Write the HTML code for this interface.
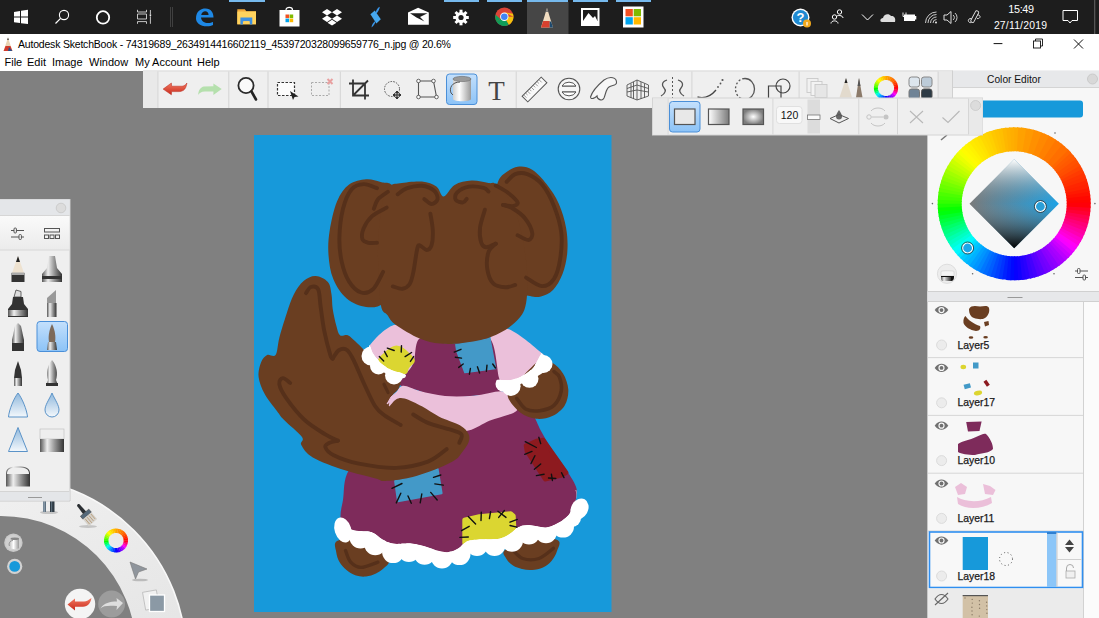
<!DOCTYPE html>
<html><head><meta charset="utf-8">
<style>
html,body{margin:0;padding:0;width:1099px;height:618px;overflow:hidden;background:#808080;font-family:"Liberation Sans", sans-serif;}
.a{position:absolute;}
#tb{left:0;top:0;width:1099px;height:34px;background:#1d1d1d;}
#title{left:0;top:34px;width:1099px;height:21px;background:#fff;}
#menu{left:0;top:55px;width:1099px;height:15.5px;background:#fff;}
.mt{position:absolute;top:0;font-size:11px;color:#000;line-height:15px;white-space:nowrap;}
</style></head><body>
<div class="a" id="tb"><svg width="1099" height="34" style="position:absolute;left:0;top:0"><rect x="229" y="0" width="36" height="2" fill="#76b9ed"/><rect x="444" y="0" width="35" height="2" fill="#76b9ed"/><rect x="487" y="0" width="35" height="2" fill="#76b9ed"/><rect x="527" y="0" width="41" height="2" fill="#76b9ed"/><rect x="573" y="0" width="35" height="2" fill="#76b9ed"/><rect x="616" y="0" width="35" height="2" fill="#76b9ed"/><rect x="527" y="2" width="41.5" height="32" fill="#464646"/><path d="M14,12 L20,11 L20,16.6 L14,16.6Z M21,10.8 L28,9.8 L28,16.6 L21,16.6Z M14,17.4 L20,17.4 L20,23 L14,22.2Z M21,17.4 L28,17.4 L28,24 L21,23.2Z" fill="#fff"/><circle cx="64" cy="15" r="4.6" fill="none" stroke="#fff" stroke-width="1.1"/><line x1="60.6" y1="18.4" x2="55.5" y2="23.5" stroke="#fff" stroke-width="1.2"/><circle cx="103" cy="17.4" r="6.2" fill="none" stroke="#fff" stroke-width="1.8"/><path d="M137.5,9.8 V12 H146.5 V9.8 M137.5,23.8 V21.6 H146.5 V23.8 M137.5,14 H146.5 V19 H137.5Z M150.4,10 V14 M150.4,16.3 V23.8" stroke="#d8d8d8" stroke-width="0.9" fill="none"/><circle cx="150.4" cy="15.1" r="0.9" fill="#fff"/><rect x="170" y="7" width="0.8" height="20" fill="#4a4a4a"/><rect x="172.2" y="7" width="0.8" height="20" fill="#4a4a4a"/><path d="M196,18.5 C196,11 201,8.5 205.5,8.5 C211,8.5 213.5,12.5 213.5,17.5 L201,17.5 C201.5,21.5 204.5,23 208,23 C210,23 212,22.5 213,22 L213,25 C211.5,25.8 209.5,26.3 207,26.3 C200,26.3 196,22.5 196,18.5Z M201.2,15 L208.6,15 C208.4,12.6 207.2,11.3 205.2,11.3 C203.3,11.3 201.8,12.6 201.2,15Z" fill="#1e88e5"/><path d="M237.3,9.3 h7.5 l1.5,2 h9.7 v13 h-18.7z" fill="#f2a93a"/><rect x="237.3" y="11.5" width="18.7" height="12.8" fill="#ffd35e"/><path d="M240.4,17.5 h11.9 v7.1 h-2.5 v-3.3 h-6.9 v3.3 h-2.5z" fill="#3d8fe0"/><rect x="244" y="21.2" width="5" height="2.2" fill="#ffd35e"/><path d="M286,10 C286,6.5 292.5,6.5 292.5,10" fill="none" stroke="#fff" stroke-width="1.2"/><rect x="279.5" y="10" width="20" height="16.5" fill="#fff"/><rect x="285.5" y="14.5" width="3.6" height="3.6" fill="#f25022"/><rect x="289.6" y="14.5" width="3.6" height="3.6" fill="#7fba00"/><rect x="285.5" y="18.6" width="3.6" height="3.6" fill="#00a4ef"/><rect x="289.6" y="18.6" width="3.6" height="3.6" fill="#ffb900"/><path d="M327,9 l5,3.2 -5,3.2 -5,-3.2z M337,9 l5,3.2 -5,3.2 -5,-3.2z M327,15.6 l5,3.2 -5,3.2 -5,-3.2z M337,15.6 l5,3.2 -5,3.2 -5,-3.2z M332,19.8 l4.5,2.9 -4.5,2.9 -4.5,-2.9z" fill="#fff"/><path d="M370.4,14.3 L374.8,10.4 L380.8,19.2 L376.4,23.6z" fill="#46a8ef"/><path d="M375.6,12.8 C376,9.8 378,7.6 379.8,6.8 C379.6,9.2 378.2,11.6 376.6,13.6z M371.5,27.5 C371.8,24.6 373.5,22 375.6,20.8 C375.5,23.2 374,25.6 371.5,27.5z" fill="#3a94e6"/><path d="M408,12.6 L418.1,7.7 L428.8,12.6 L428.8,24.7 L408,24.7z" fill="#fff"/><path d="M410,13.3 L427.5,13.3 L420,17 L424.5,21.5 L416.5,17.4z" fill="#1d1d1d"/><g transform="translate(461,17.5)"><circle r="5.5" fill="#fff"/><circle r="2.6" fill="#1c1c1c"/><rect x="-1.5" y="-7.8" width="3" height="3.5" fill="#fff" transform="rotate(0)"/><rect x="-1.5" y="-7.8" width="3" height="3.5" fill="#fff" transform="rotate(45)"/><rect x="-1.5" y="-7.8" width="3" height="3.5" fill="#fff" transform="rotate(90)"/><rect x="-1.5" y="-7.8" width="3" height="3.5" fill="#fff" transform="rotate(135)"/><rect x="-1.5" y="-7.8" width="3" height="3.5" fill="#fff" transform="rotate(180)"/><rect x="-1.5" y="-7.8" width="3" height="3.5" fill="#fff" transform="rotate(225)"/><rect x="-1.5" y="-7.8" width="3" height="3.5" fill="#fff" transform="rotate(270)"/><rect x="-1.5" y="-7.8" width="3" height="3.5" fill="#fff" transform="rotate(315)"/></g><circle cx="504.3" cy="16.8" r="9.2" fill="#db4437"/><path d="M504.3,16.8 L496.3,21.4 A9.2,9.2 0 0 0 508.9,24.8z" fill="#0f9d58"/><path d="M504.3,16.8 L508.9,24.8 A9.2,9.2 0 0 0 513.5,16.8z M504.3,12.2 L513,13.8 A9.2,9.2 0 0 1 513.5,16.8z" fill="#f4c20d"/><path d="M496.3,21.4 A9.2,9.2 0 0 1 495.4,14.6 L500.3,19z" fill="#0f9d58"/><circle cx="504.3" cy="16.8" r="4.2" fill="#fff"/><circle cx="504.3" cy="16.8" r="3.3" fill="#4285f4"/><path d="M547,8 L541,27.5 L553,27.5z" fill="#f0dcc0"/><path d="M543.2,21 L549.7,21 L549.7,27.5 L541,27.5z" fill="#d8402e"/><path d="M549.7,21.4 L551.2,21.4 L553,27.5 L549.7,27.5z" fill="#1f4a6e"/><path d="M547,7.7 L545.8,12 L548.2,12z" fill="#777"/><rect x="581" y="8" width="18.5" height="18" fill="#fff"/><rect x="583" y="10" width="14.5" height="11" fill="#1c1c1c"/><path d="M583,21 L588.5,13 L593,18 L595,16 L597.5,21z" fill="#fff"/><rect x="623" y="6.5" width="20.5" height="21" fill="#fff"/><rect x="625.5" y="9" width="7.3" height="7.3" fill="#f25022"/><rect x="633.7" y="9" width="7.3" height="7.3" fill="#7fba00"/><rect x="625.5" y="17.2" width="7.3" height="7.3" fill="#00a4ef"/><rect x="633.7" y="17.2" width="7.3" height="7.3" fill="#ffb900"/><circle cx="800.5" cy="17.5" r="9" fill="#fff"/><circle cx="800.5" cy="17.5" r="7.6" fill="#1f8ad2"/><text x="800.5" y="22" font-family='"Liberation Sans"' font-weight="bold" font-size="13" fill="#fff" text-anchor="middle">?</text><circle cx="807" cy="23.5" r="4" fill="#f0a81e"/><rect x="806.4" y="22" width="1.2" height="3.5" fill="#fff"/><g fill="none" stroke="#fff" stroke-width="1"><circle cx="834.5" cy="17" r="2.2"/><path d="M831,23.5 C831,20 838,20 838,23.5"/><circle cx="839.5" cy="12" r="2.2"/><path d="M836.5,16.5 C837,15 843,15 843,18"/></g><path d="M862,14.5 L867.5,20 L873,14.5" fill="none" stroke="#fff" stroke-width="1"/><path d="M882,22 C879.5,22 880,18 883,18 C883.5,14 889,13 891,16 C894,15.5 896,18 895,22z" fill="#ddd"/><rect x="904" y="14.5" width="11" height="6.5" fill="#fff"/><rect x="915" y="16" width="1.3" height="3.5" fill="#fff"/><path d="M903,12.5 v4 h3 v-4" fill="none" stroke="#fff" stroke-width="0.9"/><g fill="none" stroke="#ddd" stroke-width="0.9"><path d="M925.5,23 A11,11 0 0 1 936.5,12"/><path d="M928,23 A8.5,8.5 0 0 1 936.5,14.5"/><path d="M930.5,23 A6,6 0 0 1 936.5,17"/><path d="M933,23 A3.5,3.5 0 0 1 936.5,19.5"/></g><circle cx="936" cy="22.5" r="0.9" fill="#fff"/><path d="M944,15 h3 l4,-3.5 v12 l-4,-3.5 h-3z" fill="none" stroke="#ddd" stroke-width="1"/><path d="M953,15 a3,3 0 0 1 0,5 M955,13 a6,6 0 0 1 0,9" fill="none" stroke="#ddd" stroke-width="0.9"/><g fill="none" stroke="#e8e8e8" stroke-width="0.9"><rect x="968.5" y="15" width="12.5" height="3.4" rx="1.2" transform="rotate(-62 974.7 16.7)"/><path d="M971.5,18.5 C967,18 967.5,23.5 971.5,22.5"/><path d="M977.5,14.8 C981,15 981,18.8 977,18.6"/></g><text x="1021" y="13" font-family='"Liberation Sans", sans-serif' font-size="10.8" letter-spacing="-0.3" fill="#fff" text-anchor="middle">15:49</text><text x="1020.5" y="29" font-family='"Liberation Sans", sans-serif' font-size="10.4" letter-spacing="0.2" fill="#fff" text-anchor="middle">27/11/2019</text><path d="M1063,10.5 h14.5 v10 h-5.5 l-2,2.5 l-2,-2.5 h-5z" fill="none" stroke="#fff" stroke-width="1"/><rect x="1094" y="0" width="1.3" height="34" fill="#555"/></svg></div>
<div class="a" id="title">
 <svg class="a" style="left:0;top:0" width="20" height="21"><path d="M8,3.5 L3.6,17 L12.4,17z" fill="#e9d4b4"/><path d="M5.5,12 L3.6,17 L12.4,17 L10.5,12z" fill="#d13a2c"/><path d="M9,13 L12.4,17 L8,17z" fill="#2b4f88"/><path d="M8,3.5 L7.2,6 L8.8,6z" fill="#333"/></svg>
 <div class="mt" style="left:18px;top:3px;font-size:10.5px;letter-spacing:-0.2px;">Autodesk SketchBook - 74319689_2634914416602119_4539720328099659776_n.jpg @ 20.6%</div>
 <svg class="a" style="left:985px;top:0" width="114" height="21"><line x1="8.6" y1="9.6" x2="17.4" y2="9.6" stroke="#111" stroke-width="1"/><path d="M50.5,7 V5 H57.5 V12 H55.5" fill="none" stroke="#111" stroke-width="0.9"/><rect x="48.5" y="7" width="7" height="7" fill="none" stroke="#111" stroke-width="0.9"/><path d="M89,5.5 L98,14.5 M98,5.5 L89,14.5" stroke="#111" stroke-width="1"/></svg>
</div>
<div class="a" id="menu">
 <div class="mt" style="left:4.5px">File</div><div class="mt" style="left:27px">Edit</div><div class="mt" style="left:52px">Image</div><div class="mt" style="left:89px">Window</div><div class="mt" style="left:135px">My Account</div><div class="mt" style="left:197px">Help</div>
</div>
<svg class="a" style="left:0;top:0" width="1099" height="618"><defs>
<linearGradient id="gUndo" x1="0" y1="0" x2="0" y2="1"><stop offset="0" stop-color="#f27a62"/><stop offset="1" stop-color="#c8281a"/></linearGradient>
<linearGradient id="gRedo" x1="0" y1="0" x2="0" y2="1"><stop offset="0" stop-color="#c9ecc4"/><stop offset="1" stop-color="#a4d89c"/></linearGradient>
<linearGradient id="gSel" x1="0" y1="0" x2="0" y2="1"><stop offset="0" stop-color="#c4e0fc"/><stop offset="1" stop-color="#8cc3f7"/></linearGradient>
<linearGradient id="gCan" x1="0" y1="0" x2="1" y2="0"><stop offset="0" stop-color="#d0d0d0"/><stop offset="0.35" stop-color="#ffffff"/><stop offset="1" stop-color="#9a9a9a"/></linearGradient>
<linearGradient id="gLin" x1="0" y1="0" x2="1" y2="0"><stop offset="0" stop-color="#ffffff"/><stop offset="1" stop-color="#7a7a7a"/></linearGradient>
<radialGradient id="gRad"><stop offset="0" stop-color="#ffffff"/><stop offset="1" stop-color="#7d7d7d"/></radialGradient>
<linearGradient id="gMetal" x1="0" y1="0" x2="1" y2="0"><stop offset="0" stop-color="#555"/><stop offset="0.3" stop-color="#eee"/><stop offset="0.6" stop-color="#999"/><stop offset="1" stop-color="#333"/></linearGradient>
<linearGradient id="gBlueTri" x1="0" y1="0" x2="0" y2="1"><stop offset="0" stop-color="#8fb8dc"/><stop offset="1" stop-color="#f4f8fc"/></linearGradient>
<linearGradient id="gPal2" x1="0" y1="0" x2="0" y2="1"><stop offset="0" stop-color="#fafafa"/><stop offset="1" stop-color="#ebebeb"/></linearGradient>
<linearGradient id="gLag" x1="0" y1="0" x2="1" y2="1"><stop offset="0" stop-color="#f4f4f4"/><stop offset="1" stop-color="#e4e4e4"/></linearGradient>
</defs><rect x="254" y="135" width="357.5" height="477" fill="#1799da"/>
<path d="M337.0,541.0 C333.0,543.3 335.8,548.5 336.2,552.0 C336.6,555.5 337.8,559.0 339.5,562.0 C341.2,565.0 343.8,567.8 346.5,570.0 C349.2,572.2 352.8,574.4 356.0,575.5 C359.2,576.6 362.7,576.8 366.0,576.5 C369.3,576.2 373.0,574.9 376.0,573.5 C379.0,572.1 381.8,570.1 384.0,568.0 C386.2,565.9 389.3,564.3 389.0,561.0 C388.7,557.7 386.8,551.8 382.0,548.0 C377.2,544.2 367.5,539.2 360.0,538.0 C352.5,536.8 341.0,538.7 337.0,541.0Z" fill="#6a3e21"/>
<path d="M345.5,550.5 C346.4,552.5 348.1,559.4 350.7,562.2 C353.3,565.0 356.5,567.4 361.0,567.4 C365.5,567.4 375.1,563.1 377.9,562.2" fill="none" stroke="#56301a" stroke-width="3.4" stroke-linecap="round" stroke-linejoin="round"/>
<path d="M505.0,550.0 C501.1,553.5 505.2,556.4 506.5,559.0 C507.8,561.6 510.4,563.8 513.0,565.5 C515.6,567.2 518.8,568.2 522.0,569.0 C525.2,569.8 528.5,570.2 532.0,570.0 C535.5,569.8 539.8,569.0 543.0,567.5 C546.2,566.0 549.2,563.8 551.5,561.0 C553.8,558.2 556.0,554.5 557.0,551.0 C558.0,547.5 562.0,542.2 557.5,540.0 C553.0,537.8 538.8,536.3 530.0,538.0 C521.2,539.7 508.9,546.5 505.0,550.0Z" fill="#6a3e21"/>
<path d="M512.6,549.7 C514.3,551.2 518.4,557.0 522.8,558.5 C527.2,560.0 533.8,560.2 538.9,558.5 C544.0,556.8 551.0,550.0 553.4,548.3" fill="none" stroke="#56301a" stroke-width="3.4" stroke-linecap="round" stroke-linejoin="round"/>
<path d="M349.0,470.0 C342.8,480.0 344.4,492.1 343.0,500.0 C341.6,507.9 340.3,511.6 340.5,517.4 C340.7,523.2 340.7,531.7 344.0,535.0 C347.3,538.3 355.3,535.9 360.5,537.4 C365.7,538.9 369.8,541.8 375.2,544.2 C380.6,546.7 387.5,551.0 393.1,552.1 C398.7,553.2 403.6,550.7 408.9,551.0 C414.1,551.3 419.1,552.6 424.6,553.7 C430.1,554.8 436.2,557.4 442.0,557.5 C447.8,557.6 453.7,556.2 459.5,554.1 C465.3,552.0 471.2,546.4 477.0,544.9 C482.8,543.4 488.7,545.6 494.5,544.9 C500.3,544.2 506.2,542.6 512.0,540.7 C517.8,538.8 523.3,534.8 529.0,533.4 C534.7,532.0 540.3,533.3 546.0,532.2 C551.7,531.1 558.7,529.0 563.0,526.6 C567.3,524.2 570.5,519.4 572.0,518.0 C573.5,516.6 571.2,521.7 572.0,518.0 C572.8,514.3 576.0,501.3 576.5,495.7 C577.0,490.1 577.2,489.5 575.0,484.4 C572.8,479.3 567.0,471.1 563.0,465.0 C559.0,458.9 554.7,453.7 551.0,448.0 C547.3,442.3 544.2,436.8 541.0,431.0 C537.8,425.2 535.5,417.5 532.0,413.0 C528.5,408.5 525.3,404.2 520.0,404.0 C514.7,403.8 513.3,409.3 500.0,412.0 C486.7,414.7 460.0,415.3 440.0,420.0 C420.0,424.7 395.2,431.7 380.0,440.0 C364.8,448.3 355.2,460.0 349.0,470.0Z" fill="#7e2b5b"/>
<path d="M395.1,481.0 L437.6,468.9 L441.6,493.2 L398.0,501.3Z" fill="#4399c8" stroke="#4399c8" stroke-width="2" stroke-linejoin="round"/>
<path d="M525.7,445.5 L536.4,440.7 L543.2,439.7 L566.5,472.7 L561.6,475.6 L545.1,479.5 L526.7,451.4Z" fill="#8d1a1f" stroke="#8d1a1f" stroke-width="4" stroke-linejoin="round"/>
<path d="M464.3,519.8 L479.3,516.2 L510.8,513.3 L513.7,515.8 L514.5,531.6 L493.8,539.6 L479.3,541.0 L464.3,543.0Z" fill="#dbd631" stroke="#dbd631" stroke-width="4" stroke-linejoin="round"/>
<clipPath id="trimclip"><path d="M340.5,517.4 C342.2,519.3 347.5,526.6 351.0,528.9 C354.5,531.2 358.0,530.5 361.5,531.0 C365.0,531.5 368.5,530.6 372.0,532.0 C375.5,533.4 379.1,537.5 382.6,539.4 C386.1,541.3 389.6,542.9 393.1,543.6 C396.6,544.3 400.8,543.7 403.6,543.6 C406.4,543.5 406.5,542.9 410.0,543.3 C413.5,543.7 419.8,544.9 424.6,546.2 C429.5,547.5 435.1,550.1 439.1,551.1 C443.1,552.1 445.6,552.5 448.8,552.0 C452.0,551.5 455.6,550.0 458.5,548.2 C461.4,546.4 463.1,542.9 466.3,541.4 C469.6,539.9 472.4,539.9 478.0,539.4 C483.6,538.9 494.4,539.7 500.0,538.5 C505.6,537.3 508.6,534.3 511.6,532.4 C514.6,530.5 515.1,528.2 518.0,527.0 C520.9,525.8 524.3,525.0 529.0,525.1 C533.7,525.2 541.1,527.8 546.0,527.4 C550.9,527.0 554.6,524.9 558.4,522.8 C562.2,520.7 566.0,517.9 568.6,514.9 C571.2,511.9 573.0,507.9 574.3,504.7 C575.6,501.5 576.3,498.1 576.5,495.7 C576.7,493.2 575.6,490.9 575.4,490.0 L600,490 L600,600 L320,600 L320,517.4Z"/></clipPath>
<g clip-path="url(#trimclip)"><path d="M340.5,517.4 C341.7,517.2 347.5,526.6 351.0,528.9 C354.5,531.2 358.0,530.5 361.5,531.0 C365.0,531.5 368.5,530.6 372.0,532.0 C375.5,533.4 379.1,537.5 382.6,539.4 C386.1,541.3 389.6,542.9 393.1,543.6 C396.6,544.3 400.8,543.7 403.6,543.6 C406.4,543.5 406.5,542.9 410.0,543.3 C413.5,543.7 419.8,544.9 424.6,546.2 C429.5,547.5 435.1,550.1 439.1,551.1 C443.1,552.1 445.6,552.5 448.8,552.0 C452.0,551.5 455.6,550.0 458.5,548.2 C461.4,546.4 463.1,542.9 466.3,541.4 C469.6,539.9 472.4,539.9 478.0,539.4 C483.6,538.9 494.4,539.7 500.0,538.5 C505.6,537.3 508.6,534.3 511.6,532.4 C514.6,530.5 515.1,528.2 518.0,527.0 C520.9,525.8 524.3,525.0 529.0,525.1 C533.7,525.2 541.1,527.8 546.0,527.4 C550.9,527.0 554.6,524.9 558.4,522.8 C562.2,520.7 566.0,517.9 568.6,514.9 C571.2,511.9 573.0,507.9 574.3,504.7 C575.6,501.5 576.3,498.1 576.5,495.7 C576.7,493.2 576.1,486.3 575.4,490.0 C574.6,493.7 574.1,511.9 572.0,518.0 C569.9,524.1 567.3,524.2 563.0,526.6 C558.7,529.0 551.7,531.1 546.0,532.2 C540.3,533.3 534.7,532.0 529.0,533.4 C523.3,534.8 517.8,538.8 512.0,540.7 C506.2,542.6 500.3,544.2 494.5,544.9 C488.7,545.6 482.8,543.4 477.0,544.9 C471.2,546.4 465.3,552.0 459.5,554.1 C453.7,556.2 447.8,557.6 442.0,557.5 C436.2,557.4 430.1,554.8 424.6,553.7 C419.1,552.6 414.1,551.3 408.9,551.0 C403.6,550.7 398.7,553.2 393.1,552.1 C387.5,551.0 380.6,546.7 375.2,544.2 C369.8,541.8 365.7,539.8 360.5,537.4 C355.3,535.0 347.3,533.3 344.0,530.0 C340.7,526.7 339.3,517.6 340.5,517.4Z" fill="#ffffff"/><circle cx="360.5" cy="537.4" r="11" fill="#ffffff"/><circle cx="375.2" cy="544.2" r="11" fill="#ffffff"/><circle cx="393.1" cy="552.1" r="11" fill="#ffffff"/><circle cx="408.9" cy="551" r="11" fill="#ffffff"/><circle cx="424.6" cy="553.7" r="11" fill="#ffffff"/><circle cx="442" cy="557.5" r="11" fill="#ffffff"/><circle cx="459.5" cy="554.1" r="11" fill="#ffffff"/><circle cx="477" cy="544.9" r="11" fill="#ffffff"/><circle cx="494.5" cy="544.9" r="11" fill="#ffffff"/><circle cx="512" cy="540.7" r="11" fill="#ffffff"/><circle cx="529" cy="533.4" r="11" fill="#ffffff"/><circle cx="546" cy="532.2" r="11" fill="#ffffff"/><circle cx="563" cy="526.6" r="11" fill="#ffffff"/><circle cx="572" cy="518" r="9" fill="#ffffff"/></g>
<ellipse cx="343" cy="530" rx="8.3" ry="12.8" transform="rotate(-18 343 530)" fill="#ffffff"/>
<ellipse cx="579.5" cy="509" rx="8.5" ry="11" transform="rotate(28 579.5 509)" fill="#ffffff"/>
<path d="M369.6,345.7 C373.5,339.8 386.9,325.8 395.5,324.7 C404.1,323.6 418.3,332.8 421.3,339.3 C424.3,345.8 416.3,357.3 413.3,363.5 C410.3,369.7 407.9,375.1 403.5,376.5 C399.1,377.9 392.2,374.8 387.0,372.0 C381.8,369.2 374.9,364.4 372.0,360.0 C369.1,355.6 365.7,351.6 369.6,345.7Z" fill="#ebc0da"/>
<path d="M490.0,339.6 C491.8,331.1 499.2,326.7 507.8,328.9 C516.4,331.1 535.1,347.4 541.6,352.9 C548.1,358.4 547.6,358.8 547.0,362.0 C546.4,365.2 542.8,368.8 538.0,372.0 C533.2,375.2 524.3,379.2 518.0,381.0 C511.7,382.8 503.5,383.2 500.0,383.0 C496.5,382.8 498.7,387.2 497.0,380.0 C495.3,372.8 488.2,348.1 490.0,339.6Z" fill="#ebc0da"/>
<path d="M419.7,338.5 C425.0,335.1 437.9,342.6 445.0,343.3 C452.1,344.1 455.1,343.8 462.6,343.0 C470.1,342.2 483.8,332.7 489.8,338.5 C495.9,344.3 496.9,368.8 498.9,377.6 C500.9,386.4 505.8,388.2 501.7,391.2 C497.6,394.2 484.3,394.6 474.0,395.7 C463.7,396.8 449.1,398.8 440.0,398.0 C430.9,397.2 426.6,393.2 419.7,391.0 C412.8,388.8 401.4,387.0 398.7,384.6 C396.0,382.2 401.1,380.0 403.5,376.5 C405.9,373.0 410.6,369.8 413.3,363.5 C416.0,357.2 414.4,341.9 419.7,338.5Z" fill="#7e2b5b"/>
<path d="M378.0,361.0 C377.8,357.7 383.3,353.5 386.0,351.0 C388.7,348.5 391.8,346.8 394.0,346.0 C396.2,345.2 397.0,345.3 399.0,346.0 C401.0,346.7 403.4,347.6 406.0,350.0 C408.6,352.4 414.3,357.2 414.8,360.2 C415.3,363.2 410.6,365.7 409.0,368.0 C407.4,370.3 408.7,373.6 405.1,374.0 C401.5,374.4 391.8,372.9 387.3,370.7 C382.8,368.5 378.2,364.3 378.0,361.0Z" fill="#dbd631"/>
<path d="M455.9,344.7 L489.8,338.5 L495.5,368.5 L464.9,372.5 L457.0,351.5Z" fill="#4399c8" stroke="#4399c8" stroke-width="1.6" stroke-linejoin="round"/>
<path d="M386.6,404.8 C385.6,401.1 391.2,400.6 393.8,397.5 C396.4,394.4 397.7,387.1 402.0,386.0 C406.3,384.9 412.5,389.3 419.7,391.0 C426.9,392.7 435.9,395.2 445.0,396.0 C454.1,396.8 464.6,396.5 474.0,395.7 C483.4,394.9 495.7,390.8 501.7,391.2 C507.7,391.6 507.5,394.8 510.0,398.0 C512.5,401.2 520.0,406.9 516.7,410.7 C513.4,414.4 498.0,417.2 490.0,420.5 C482.0,423.8 476.8,428.6 468.5,430.5 C460.2,432.4 451.4,433.8 440.0,432.0 C428.6,430.2 408.9,424.5 400.0,420.0 C391.1,415.5 387.6,408.6 386.6,404.8Z" fill="#ebc0da"/>
<path d="M540.0,360.0 C546.2,356.3 548.5,360.5 552.3,362.7 C556.1,364.9 560.3,368.9 563.0,373.4 C565.7,377.8 568.0,384.1 568.3,389.4 C568.6,394.7 567.4,401.0 564.7,405.4 C562.0,409.8 557.0,413.8 552.3,416.0 C547.6,418.2 541.6,419.4 536.3,418.8 C530.9,418.2 525.0,416.2 520.2,412.5 C515.5,408.8 508.7,401.1 507.8,396.5 C506.9,391.9 509.6,391.1 515.0,385.0 C520.4,378.9 533.8,363.7 540.0,360.0Z" fill="#6a3e21"/>
<path d="M516.7,398.3 C518.2,400.1 521.8,406.9 525.6,409.0 C529.5,411.1 535.1,411.3 539.8,410.7 C544.5,410.1 550.4,408.6 554.0,405.4 C557.6,402.1 560.3,395.9 561.2,391.2 C562.1,386.5 560.6,380.3 559.4,377.0 C558.2,373.7 554.9,372.5 554.0,371.6" fill="none" stroke="#56301a" stroke-width="3.6" stroke-linecap="round" stroke-linejoin="round"/>
<clipPath id="rcuff"><path d="M498.0,379.7 C499.7,379.8 505.2,380.5 508.4,380.2 C511.6,379.9 514.3,379.1 517.3,378.0 C520.3,376.9 523.5,375.3 526.2,373.5 C528.9,371.7 531.4,369.5 533.3,367.3 C535.2,365.1 536.5,362.2 537.7,360.1 C538.9,358.0 539.8,356.0 540.4,354.8 C541.0,353.6 541.1,353.3 541.3,353.0 L560,340 L570,420 L490,420 L490,379.7Z"/></clipPath>
<g clip-path="url(#rcuff)"><path d="M498.0,379.7 C499.6,379.1 505.2,380.5 508.4,380.2 C511.6,379.9 514.3,379.1 517.3,378.0 C520.3,376.9 523.5,375.3 526.2,373.5 C528.9,371.7 531.4,369.5 533.3,367.3 C535.2,365.1 536.5,362.2 537.7,360.1 C538.9,358.0 539.8,356.0 540.4,354.8 C541.0,353.6 539.4,351.3 541.3,353.0 C543.2,354.7 551.5,361.8 552.0,365.0 C552.5,368.2 547.7,369.5 544.0,372.0 C540.3,374.5 535.7,377.5 530.0,380.0 C524.3,382.5 515.2,386.3 510.0,387.0 C504.8,387.7 501.0,385.2 499.0,384.0 C497.0,382.8 496.4,380.3 498.0,379.7Z" fill="#ffffff"/><circle cx="543.5" cy="364" r="9" fill="#ffffff"/><circle cx="529.5" cy="378.8" r="9" fill="#ffffff"/><circle cx="511" cy="386.3" r="9.6" fill="#ffffff"/><circle cx="503" cy="384" r="7.5" fill="#ffffff"/></g>
<path d="M366.1,179.2 C360.9,179.6 354.0,180.9 349.1,184.6 C344.2,188.3 340.2,193.8 337.0,201.5 C333.8,209.2 331.1,221.7 329.7,230.6 C328.3,239.5 327.9,246.8 328.5,254.9 C329.1,263.0 330.3,271.8 333.3,279.1 C336.3,286.4 341.2,293.9 346.7,298.5 C352.2,303.1 359.9,306.2 366.1,307.0 C372.3,307.8 378.4,307.5 384.0,303.0 C389.6,298.5 396.5,290.5 400.0,280.0 C403.5,269.5 405.8,255.0 405.0,240.0 C404.2,225.0 399.1,199.7 395.0,190.0 C390.9,180.3 385.4,183.9 380.6,182.1 C375.8,180.3 371.4,178.8 366.1,179.2Z" fill="#6a3e21"/>
<path d="M497.0,185.5 C498.4,179.6 499.7,177.7 503.1,174.6 C506.5,171.5 512.8,167.6 517.6,166.8 C522.5,166.0 527.4,166.8 532.2,169.7 C537.1,172.6 542.3,178.6 546.7,184.3 C551.1,190.0 555.6,196.4 558.8,203.7 C562.0,211.0 564.7,219.8 566.1,227.9 C567.5,236.0 567.9,244.5 567.3,252.2 C566.7,259.9 564.9,267.7 562.5,274.0 C560.1,280.3 556.6,286.2 553.0,290.0 C549.4,293.8 544.8,295.5 541.0,296.5 C537.2,297.5 534.3,297.1 530.0,296.0 C525.7,294.9 520.8,297.7 515.0,290.0 C509.2,282.3 498.3,263.3 495.0,250.0 C491.7,236.7 494.7,220.8 495.0,210.0 C495.3,199.2 495.6,191.4 497.0,185.5Z" fill="#6a3e21"/>
<path d="M389.1,187.0 C392.1,183.4 394.5,184.2 400.0,183.3 C405.5,182.4 415.8,181.1 421.9,181.6 C428.0,182.1 432.8,184.0 436.4,186.5 C440.0,189.0 440.7,196.8 443.7,196.5 C446.7,196.2 450.0,187.7 454.6,185.0 C459.2,182.3 465.9,180.9 471.5,180.6 C477.1,180.3 484.2,182.2 488.5,183.0 C492.8,183.8 492.6,181.0 497.0,185.5 C501.4,190.0 510.2,197.6 515.0,210.0 C519.8,222.4 524.1,244.5 526.0,260.0 C527.9,275.5 527.9,292.7 526.1,303.1 C524.3,313.5 520.8,317.0 515.0,322.6 C509.2,328.2 500.1,333.4 491.4,336.8 C482.7,340.2 471.2,341.9 462.6,343.0 C454.0,344.1 447.1,344.4 440.0,343.6 C432.9,342.9 427.1,341.6 419.7,338.5 C412.3,335.4 400.9,328.6 395.5,324.7 C390.1,320.8 389.9,318.6 387.4,315.0 C384.9,311.4 382.2,314.2 380.6,303.4 C379.0,292.6 377.8,266.4 378.0,250.0 C378.2,233.6 380.1,215.5 382.0,205.0 C383.9,194.5 386.1,190.6 389.1,187.0Z" fill="#6a3e21"/>
<path d="M315.7,276.1 C319.8,276.3 325.3,279.1 327.9,282.1 C330.5,285.1 330.7,289.8 331.5,294.3 C332.3,298.8 331.9,303.6 332.7,308.9 C333.5,314.2 335.2,321.5 336.4,325.9 C337.6,330.3 338.1,333.6 340.0,335.2 C341.9,336.8 345.2,334.1 347.8,335.2 C350.4,336.3 352.8,339.1 355.5,341.6 C358.2,344.1 360.6,346.6 364.0,350.0 C367.4,353.4 372.0,358.3 376.0,362.0 C380.0,365.7 384.0,369.3 388.0,372.0 C392.0,374.7 398.2,375.3 400.0,378.0 C401.8,380.7 400.3,385.0 399.0,388.0 C397.7,391.0 393.7,392.9 392.0,396.0 C390.3,399.1 388.3,405.7 389.0,406.3 C389.7,406.9 393.4,400.7 396.0,399.4 C398.6,398.1 400.3,397.4 404.6,398.5 C408.9,399.6 416.1,403.3 421.9,406.3 C427.7,409.3 432.9,413.5 439.2,416.7 C445.5,419.9 455.0,422.4 459.9,425.3 C464.8,428.2 467.1,431.1 468.5,434.0 C469.9,436.9 469.6,439.4 468.5,442.6 C467.4,445.8 463.9,450.1 461.6,453.0 C459.4,455.9 459.0,457.4 455.0,460.0 C451.0,462.6 445.2,465.5 437.6,468.5 C430.0,471.5 418.1,475.7 409.3,477.8 C400.5,479.9 390.6,480.9 385.0,481.0 C379.4,481.1 382.4,480.2 375.6,478.4 C368.8,476.6 354.7,473.5 344.2,470.0 C333.7,466.5 319.9,461.6 312.8,457.4 C305.7,453.2 303.1,448.4 301.3,445.0 C299.5,441.6 304.9,441.2 302.0,437.0 C299.1,432.8 288.3,424.4 284.1,420.0 C279.9,415.6 280.1,415.2 276.9,410.9 C273.7,406.5 267.8,399.6 264.7,393.9 C261.6,388.2 259.2,382.2 258.6,376.9 C258.0,371.6 259.7,365.9 261.1,362.3 C262.5,358.7 264.7,356.2 267.1,355.0 C269.5,353.8 273.6,357.8 275.6,355.0 C277.6,352.2 277.5,344.9 279.3,338.0 C281.1,331.1 284.2,321.0 286.6,313.7 C289.0,306.4 291.1,299.8 293.9,294.3 C296.7,288.9 300.0,284.0 303.6,281.0 C307.2,278.0 311.6,275.9 315.7,276.1Z" fill="#6a3e21"/>
<path d="M377.0,188.2 C374.8,187.5 367.9,183.9 363.7,184.1 C359.4,184.3 354.9,185.3 351.5,189.4 C348.1,193.5 345.0,200.7 343.0,208.8 C341.0,216.9 339.6,229.0 339.4,237.9 C339.2,246.8 340.2,254.9 341.8,262.2 C343.4,269.5 345.9,276.6 349.1,281.6 C352.3,286.7 357.1,291.3 361.2,292.5 C365.2,293.7 369.8,292.2 373.4,288.8 C377.0,285.4 381.5,274.7 383.1,271.9" fill="none" stroke="#56301a" stroke-width="3.9" stroke-linecap="round" stroke-linejoin="round"/>
<path d="M373.8,208.8 C374.5,207.2 375.9,201.9 378.2,199.1 C380.5,196.3 386.3,193.0 387.9,191.8" fill="none" stroke="#56301a" stroke-width="3.9" stroke-linecap="round" stroke-linejoin="round"/>
<path d="M397.6,194.3 C399.2,193.3 403.2,189.6 407.3,188.2 C411.4,186.8 417.4,185.4 421.9,185.8 C426.3,186.2 431.4,188.4 434.0,190.6 C436.6,192.8 438.0,196.9 437.6,199.1 C437.2,201.3 433.8,204.0 431.6,204.0 C429.4,204.0 425.5,199.9 424.3,199.1" fill="none" stroke="#56301a" stroke-width="3.9" stroke-linecap="round" stroke-linejoin="round"/>
<path d="M386.7,207.6 C384.3,209.0 375.9,212.7 372.1,216.1 C368.3,219.5 365.3,224.4 363.7,228.2 C362.1,232.0 361.6,236.7 362.4,239.1 C363.2,241.5 366.1,242.2 368.5,242.8 C370.9,243.4 375.6,242.8 377.0,242.8" fill="none" stroke="#56301a" stroke-width="3.9" stroke-linecap="round" stroke-linejoin="round"/>
<path d="M430.4,213.7 C430.8,216.5 432.6,225.3 432.8,230.6 C433.0,235.8 432.6,242.0 431.6,245.2 C430.6,248.4 428.7,250.0 426.7,250.0 C424.7,250.0 421.0,245.2 419.4,245.2 C417.8,245.2 418.0,245.6 417.0,250.0 C416.0,254.4 414.6,266.2 413.4,271.9 C412.2,277.6 411.5,281.2 409.7,284.0 C407.9,286.8 405.3,288.4 402.5,288.8 C399.7,289.2 394.4,286.8 392.8,286.4" fill="none" stroke="#56301a" stroke-width="3.9" stroke-linecap="round" stroke-linejoin="round"/>
<path d="M506.7,181.8 C508.1,180.5 511.8,175.4 515.2,174.1 C518.6,172.8 522.8,172.4 527.3,174.1 C531.8,175.8 537.4,179.0 541.9,184.3 C546.4,189.6 550.8,198.0 554.0,206.1 C557.2,214.2 560.3,223.9 561.3,232.8 C562.3,241.7 561.3,251.7 560.1,259.4 C558.9,267.1 557.0,274.4 554.0,278.8 C551.0,283.2 546.5,286.3 541.9,286.1 C537.2,285.9 528.7,279.0 526.1,277.6" fill="none" stroke="#56301a" stroke-width="3.9" stroke-linecap="round" stroke-linejoin="round"/>
<path d="M488.5,191.5 C487.7,190.9 486.9,188.7 483.7,187.9 C480.5,187.1 473.6,185.9 469.1,186.7 C464.7,187.5 459.2,190.5 457.0,192.7 C454.8,194.9 454.8,198.4 455.8,200.0 C456.8,201.6 461.2,202.6 463.0,202.4 C464.8,202.2 466.1,199.4 466.7,198.8" fill="none" stroke="#56301a" stroke-width="3.9" stroke-linecap="round" stroke-linejoin="round"/>
<path d="M495.8,185.5 C497.8,186.7 504.3,189.9 507.9,192.7 C511.5,195.5 516.8,200.2 517.6,202.4 C518.4,204.6 515.2,205.7 512.8,206.1 C510.4,206.5 504.7,205.1 503.1,204.9" fill="none" stroke="#56301a" stroke-width="3.9" stroke-linecap="round" stroke-linejoin="round"/>
<path d="M503.1,204.9 C504.7,205.5 509.2,206.3 512.8,208.5 C516.4,210.7 521.7,214.1 524.9,218.2 C528.1,222.2 531.6,229.2 532.2,232.8 C532.8,236.4 530.9,239.6 528.5,240.0 C526.1,240.4 519.4,236.0 517.6,235.2" fill="none" stroke="#56301a" stroke-width="3.9" stroke-linecap="round" stroke-linejoin="round"/>
<path d="M484.9,209.7 C484.1,212.7 480.6,222.4 480.0,227.9 C479.4,233.4 480.2,239.3 481.2,242.5 C482.2,245.7 483.7,247.1 486.1,247.3 C488.5,247.5 494.2,244.3 495.8,243.7" fill="none" stroke="#56301a" stroke-width="3.9" stroke-linecap="round" stroke-linejoin="round"/>
<path d="M495.8,243.7 C494.6,245.1 489.9,248.0 488.5,252.2 C487.1,256.4 486.5,263.9 487.3,269.1 C488.1,274.4 490.4,280.7 493.4,283.7 C496.4,286.7 501.9,287.1 505.5,287.3 C509.1,287.5 513.6,285.3 515.2,284.9" fill="none" stroke="#56301a" stroke-width="3.9" stroke-linecap="round" stroke-linejoin="round"/>
<path d="M306.0,293.1 C306.8,292.1 308.9,287.6 310.9,287.0 C312.9,286.4 316.6,286.2 318.2,289.4 C319.8,292.6 319.6,299.5 320.6,306.4 C321.6,313.3 322.6,322.6 324.2,330.7 C325.8,338.8 328.9,350.3 330.3,355.0 C331.7,359.7 332.3,358.1 332.7,358.7" fill="none" stroke="#56301a" stroke-width="3.9" stroke-linecap="round" stroke-linejoin="round"/>
<path d="M332.7,358.7 C333.7,357.3 336.4,351.6 338.8,350.2 C341.2,348.8 344.7,348.2 347.3,350.2 C349.9,352.2 351.8,356.6 354.6,362.3 C357.4,368.0 360.9,376.9 364.3,384.2 C367.7,391.5 371.7,400.9 375.0,406.0 C378.3,411.1 379.7,411.8 384.0,415.0 C388.3,418.2 397.9,423.3 400.7,425.0" fill="none" stroke="#56301a" stroke-width="3.9" stroke-linecap="round" stroke-linejoin="round"/>
<path d="M290.2,383.0 C289.0,382.2 284.7,377.9 282.9,378.1 C281.1,378.3 278.7,380.8 279.3,384.2 C279.9,387.6 282.4,392.8 286.6,398.7 C290.8,404.6 297.9,413.9 304.4,419.8 C310.8,425.8 319.7,430.9 325.3,434.4 C330.9,437.9 335.8,439.6 337.9,440.7" fill="none" stroke="#56301a" stroke-width="3.9" stroke-linecap="round" stroke-linejoin="round"/>
<path d="M337.9,440.7 C336.5,441.1 331.6,441.8 329.5,442.8 C327.4,443.9 324.6,444.9 325.3,447.0 C326.0,449.1 328.1,452.5 333.7,455.3 C339.3,458.1 348.3,461.6 358.8,463.7 C369.3,465.8 385.0,468.2 396.5,467.9 C408.0,467.5 419.5,464.7 427.9,461.6 C436.3,458.5 443.6,451.2 446.7,449.1" fill="none" stroke="#56301a" stroke-width="3.9" stroke-linecap="round" stroke-linejoin="round"/>
<path d="M413.2,414.5 C415.6,415.9 422.0,420.4 427.9,422.9 C433.8,425.3 443.2,427.3 448.8,429.2 C454.4,431.1 459.6,432.1 461.4,434.4 C463.1,436.7 459.6,441.4 459.3,442.8" fill="none" stroke="#56301a" stroke-width="3.9" stroke-linecap="round" stroke-linejoin="round"/>
<path d="M384.0,384.2 L388.1,392.6" fill="none" stroke="#56301a" stroke-width="3.2" stroke-linecap="round" stroke-linejoin="round"/>
<clipPath id="lcuff"><path d="M369.5,345.0 C369.6,345.2 369.8,345.2 370.4,346.5 C370.9,347.8 371.6,350.8 372.8,352.9 C374.0,355.0 375.9,357.4 377.6,359.4 C379.4,361.4 381.0,363.4 383.3,365.1 C385.6,366.9 388.7,368.7 391.4,369.9 C394.1,371.1 397.4,371.6 399.5,372.3 C401.6,373.0 403.2,373.6 404.3,374.0 C405.4,374.4 405.7,374.8 406.0,375.0 L410,400 L350,400 L350,340Z"/></clipPath>
<g clip-path="url(#lcuff)"><path d="M369.5,345.0 C369.9,343.4 369.8,345.2 370.4,346.5 C370.9,347.8 371.6,350.8 372.8,352.9 C374.0,355.0 375.9,357.4 377.6,359.4 C379.4,361.4 381.0,363.4 383.3,365.1 C385.6,366.9 388.7,368.7 391.4,369.9 C394.1,371.1 397.4,371.6 399.5,372.3 C401.6,373.0 403.2,373.6 404.3,374.0 C405.4,374.4 406.1,374.3 406.0,375.0 C405.9,375.7 406.0,377.5 404.0,378.0 C402.0,378.5 398.3,379.7 394.0,378.0 C389.7,376.3 382.3,371.7 378.0,368.0 C373.7,364.3 369.4,359.8 368.0,356.0 C366.6,352.2 369.1,346.6 369.5,345.0Z" fill="#ffffff"/><circle cx="371" cy="356" r="9.5" fill="#ffffff"/><circle cx="378.5" cy="366" r="8.5" fill="#ffffff"/><circle cx="394" cy="375.5" r="9" fill="#ffffff"/></g>
<path d="M387.0,404.0 L391.0,397.0 L398.0,391.0 L401.0,393.0 L394.0,399.0Z" fill="#ebc0da" stroke="#ebc0da" stroke-width="1.0" stroke-linejoin="round"/>
<line x1="379.3" y1="356.6" x2="383.7" y2="361" stroke="#111" stroke-width="1.4" stroke-linecap="round"/>
<line x1="384.5" y1="351.3" x2="387.3" y2="356.6" stroke="#111" stroke-width="1.4" stroke-linecap="round"/>
<line x1="387.3" y1="348.1" x2="394.2" y2="350.5" stroke="#111" stroke-width="1.4" stroke-linecap="round"/>
<line x1="401.5" y1="345.7" x2="401.2" y2="352.1" stroke="#111" stroke-width="1.4" stroke-linecap="round"/>
<line x1="405.1" y1="356.6" x2="411.6" y2="352.5" stroke="#111" stroke-width="1.4" stroke-linecap="round"/>
<line x1="410.4" y1="361.4" x2="413.6" y2="356.6" stroke="#111" stroke-width="1.4" stroke-linecap="round"/>
<line x1="454.2" y1="352.1" x2="461" y2="349.3" stroke="#111" stroke-width="1.4" stroke-linecap="round"/>
<line x1="455.3" y1="357.2" x2="461.5" y2="358.1" stroke="#111" stroke-width="1.4" stroke-linecap="round"/>
<line x1="458.7" y1="367.4" x2="463.2" y2="364" stroke="#111" stroke-width="1.4" stroke-linecap="round"/>
<line x1="469.4" y1="374.2" x2="470.4" y2="368.5" stroke="#111" stroke-width="1.4" stroke-linecap="round"/>
<line x1="479.6" y1="373" x2="477.4" y2="366.8" stroke="#111" stroke-width="1.4" stroke-linecap="round"/>
<line x1="486.4" y1="371.3" x2="487" y2="365.1" stroke="#111" stroke-width="1.4" stroke-linecap="round"/>
<line x1="495.5" y1="368" x2="492.7" y2="364" stroke="#111" stroke-width="1.4" stroke-linecap="round"/>
<line x1="391.9" y1="488.3" x2="402" y2="483.5" stroke="#111" stroke-width="1.4" stroke-linecap="round"/>
<line x1="396.3" y1="502.9" x2="400.8" y2="493.2" stroke="#111" stroke-width="1.4" stroke-linecap="round"/>
<line x1="408" y1="496" x2="411.3" y2="503.3" stroke="#111" stroke-width="1.4" stroke-linecap="round"/>
<line x1="420.2" y1="502.9" x2="421.8" y2="494" stroke="#111" stroke-width="1.4" stroke-linecap="round"/>
<line x1="430.7" y1="492.4" x2="437.2" y2="500" stroke="#111" stroke-width="1.4" stroke-linecap="round"/>
<line x1="433.5" y1="477.4" x2="440.8" y2="475" stroke="#111" stroke-width="1.4" stroke-linecap="round"/>
<line x1="434.8" y1="483.9" x2="443.3" y2="485.1" stroke="#111" stroke-width="1.4" stroke-linecap="round"/>
<line x1="525.2" y1="441.7" x2="536.4" y2="447.5" stroke="#111" stroke-width="1.4" stroke-linecap="round"/>
<line x1="538.8" y1="437.3" x2="540.7" y2="443.6" stroke="#111" stroke-width="1.4" stroke-linecap="round"/>
<line x1="524.7" y1="454.3" x2="532" y2="451.4" stroke="#111" stroke-width="1.4" stroke-linecap="round"/>
<line x1="531" y1="463.5" x2="534.9" y2="455.7" stroke="#111" stroke-width="1.4" stroke-linecap="round"/>
<line x1="534.4" y1="469.3" x2="540.7" y2="464" stroke="#111" stroke-width="1.4" stroke-linecap="round"/>
<line x1="536.4" y1="475.6" x2="544.1" y2="474.2" stroke="#111" stroke-width="1.4" stroke-linecap="round"/>
<line x1="548.5" y1="478" x2="555.8" y2="478.5" stroke="#111" stroke-width="1.4" stroke-linecap="round"/>
<line x1="551.4" y1="474.2" x2="552.4" y2="480.5" stroke="#111" stroke-width="1.4" stroke-linecap="round"/>
<line x1="561.6" y1="472.7" x2="564" y2="477.6" stroke="#111" stroke-width="1.4" stroke-linecap="round"/>
<line x1="468.3" y1="516.6" x2="475.6" y2="523.9" stroke="#111" stroke-width="1.4" stroke-linecap="round"/>
<line x1="461.5" y1="530.7" x2="469.2" y2="526.3" stroke="#111" stroke-width="1.4" stroke-linecap="round"/>
<line x1="459.9" y1="537.4" x2="468.3" y2="537" stroke="#111" stroke-width="1.4" stroke-linecap="round"/>
<line x1="481.3" y1="512.1" x2="481" y2="520.6" stroke="#111" stroke-width="1.4" stroke-linecap="round"/>
<line x1="490.6" y1="511.7" x2="489.4" y2="518.6" stroke="#111" stroke-width="1.4" stroke-linecap="round"/>
<line x1="497.9" y1="511.3" x2="506" y2="517.4" stroke="#111" stroke-width="1.4" stroke-linecap="round"/>
<line x1="504.4" y1="510.5" x2="498.7" y2="517.4" stroke="#111" stroke-width="1.4" stroke-linecap="round"/>
<line x1="510" y1="522.2" x2="517.3" y2="519.4" stroke="#111" stroke-width="1.4" stroke-linecap="round"/>
<line x1="510" y1="525.5" x2="516.9" y2="527.1" stroke="#111" stroke-width="1.4" stroke-linecap="round"/><path d="M-172,656.8 A179,179 0 0 1 186.2,656.8 L136.2,651.2 A135.3,135.3 0 0 0 -134.4,651.2z" fill="url(#gLag)"/><path d="M-172,656.8 A179,179 0 0 1 186.2,656.8" fill="none" stroke="#f8f8f8" stroke-width="1.6"/><ellipse cx="49" cy="512.5" rx="9" ry="1.6" fill="#c4c4c4"/><rect x="43" y="500" width="3" height="12" fill="#5d7080"/><rect x="43.6" y="500" width="1" height="12" fill="#9fb0bd"/><rect x="50" y="500" width="4.5" height="12" fill="#2f3b44"/><rect x="51" y="500" width="1.2" height="12" fill="#5a6b78"/><ellipse cx="88" cy="526.5" rx="9" ry="1.5" fill="#c4c4c4"/><g transform="translate(0.8,1.5) rotate(-40 87 515)"><path d="M85.6,500 C86.5,499 87.5,499 88.4,500 L89,510 L85,510z" fill="#2b2f33"/><rect x="81.5" y="510" width="11" height="4" fill="#55697a" stroke="#333" stroke-width="0.5"/><rect x="81.5" y="514" width="11" height="9" fill="#d5d2cc"/><path d="M83.5,515 v7 M86,515 v7.5 M88.5,515 v7 M91,515 v6.5" stroke="#b89a74" stroke-width="0.8"/></g><path d="M125.80,540.50 A9.8,9.8 0 0 0 125.60,538.55" fill="none" stroke="hsl(3,100%,50%)" stroke-width="4.4"/><path d="M125.65,538.80 A9.8,9.8 0 0 0 125.12,536.91" fill="none" stroke="hsl(8,100%,50%)" stroke-width="4.4"/><path d="M125.21,537.15 A9.8,9.8 0 0 0 124.36,535.38" fill="none" stroke="hsl(14,100%,50%)" stroke-width="4.4"/><path d="M124.49,535.60 A9.8,9.8 0 0 0 123.34,534.01" fill="none" stroke="hsl(19,100%,50%)" stroke-width="4.4"/><path d="M123.51,534.20 A9.8,9.8 0 0 0 122.10,532.83" fill="none" stroke="hsl(25,100%,50%)" stroke-width="4.4"/><path d="M122.30,532.99 A9.8,9.8 0 0 0 120.68,531.89" fill="none" stroke="hsl(28,100%,50%)" stroke-width="4.4"/><path d="M120.90,532.01 A9.8,9.8 0 0 0 119.11,531.21" fill="none" stroke="hsl(32,100%,50%)" stroke-width="4.4"/><path d="M119.35,531.29 A9.8,9.8 0 0 0 117.45,530.81" fill="none" stroke="hsl(35,100%,50%)" stroke-width="4.4"/><path d="M117.70,530.85 A9.8,9.8 0 0 0 115.74,530.70" fill="none" stroke="hsl(38,100%,50%)" stroke-width="4.4"/><path d="M116.00,530.70 A9.8,9.8 0 0 0 114.05,530.90" fill="none" stroke="hsl(42,100%,50%)" stroke-width="4.4"/><path d="M114.30,530.85 A9.8,9.8 0 0 0 112.41,531.38" fill="none" stroke="hsl(47,100%,50%)" stroke-width="4.4"/><path d="M112.65,531.29 A9.8,9.8 0 0 0 110.88,532.14" fill="none" stroke="hsl(51,100%,50%)" stroke-width="4.4"/><path d="M111.10,532.01 A9.8,9.8 0 0 0 109.51,533.16" fill="none" stroke="hsl(56,100%,50%)" stroke-width="4.4"/><path d="M109.70,532.99 A9.8,9.8 0 0 0 108.33,534.40" fill="none" stroke="hsl(60,100%,50%)" stroke-width="4.4"/><path d="M108.49,534.20 A9.8,9.8 0 0 0 107.39,535.82" fill="none" stroke="hsl(71,100%,50%)" stroke-width="4.4"/><path d="M107.51,535.60 A9.8,9.8 0 0 0 106.71,537.39" fill="none" stroke="hsl(82,100%,50%)" stroke-width="4.4"/><path d="M106.79,537.15 A9.8,9.8 0 0 0 106.31,539.05" fill="none" stroke="hsl(93,100%,50%)" stroke-width="4.4"/><path d="M106.35,538.80 A9.8,9.8 0 0 0 106.20,540.76" fill="none" stroke="hsl(104,100%,50%)" stroke-width="4.4"/><path d="M106.20,540.50 A9.8,9.8 0 0 0 106.40,542.45" fill="none" stroke="hsl(119,100%,50%)" stroke-width="4.4"/><path d="M106.35,542.20 A9.8,9.8 0 0 0 106.88,544.09" fill="none" stroke="hsl(137,100%,50%)" stroke-width="4.4"/><path d="M106.79,543.85 A9.8,9.8 0 0 0 107.64,545.62" fill="none" stroke="hsl(154,100%,50%)" stroke-width="4.4"/><path d="M107.51,545.40 A9.8,9.8 0 0 0 108.66,546.99" fill="none" stroke="hsl(172,100%,50%)" stroke-width="4.4"/><path d="M108.49,546.80 A9.8,9.8 0 0 0 109.90,548.17" fill="none" stroke="hsl(190,100%,50%)" stroke-width="4.4"/><path d="M109.70,548.01 A9.8,9.8 0 0 0 111.32,549.11" fill="none" stroke="hsl(201,100%,50%)" stroke-width="4.4"/><path d="M111.10,548.99 A9.8,9.8 0 0 0 112.89,549.79" fill="none" stroke="hsl(212,100%,50%)" stroke-width="4.4"/><path d="M112.65,549.71 A9.8,9.8 0 0 0 114.55,550.19" fill="none" stroke="hsl(223,100%,50%)" stroke-width="4.4"/><path d="M114.30,550.15 A9.8,9.8 0 0 0 116.26,550.30" fill="none" stroke="hsl(234,100%,50%)" stroke-width="4.4"/><path d="M116.00,550.30 A9.8,9.8 0 0 0 117.95,550.10" fill="none" stroke="hsl(245,100%,50%)" stroke-width="4.4"/><path d="M117.70,550.15 A9.8,9.8 0 0 0 119.59,549.62" fill="none" stroke="hsl(255,100%,50%)" stroke-width="4.4"/><path d="M119.35,549.71 A9.8,9.8 0 0 0 121.12,548.86" fill="none" stroke="hsl(265,100%,50%)" stroke-width="4.4"/><path d="M120.90,548.99 A9.8,9.8 0 0 0 122.49,547.84" fill="none" stroke="hsl(275,100%,50%)" stroke-width="4.4"/><path d="M122.30,548.01 A9.8,9.8 0 0 0 123.67,546.60" fill="none" stroke="hsl(285,100%,50%)" stroke-width="4.4"/><path d="M123.51,546.80 A9.8,9.8 0 0 0 124.61,545.18" fill="none" stroke="hsl(302,100%,50%)" stroke-width="4.4"/><path d="M124.49,545.40 A9.8,9.8 0 0 0 125.29,543.61" fill="none" stroke="hsl(318,100%,50%)" stroke-width="4.4"/><path d="M125.21,543.85 A9.8,9.8 0 0 0 125.69,541.95" fill="none" stroke="hsl(335,100%,50%)" stroke-width="4.4"/><path d="M125.65,542.20 A9.8,9.8 0 0 0 125.80,540.24" fill="none" stroke="hsl(352,100%,50%)" stroke-width="4.4"/><path d="M130,562 L147,569 L138.5,572 L135.5,579z" fill="#8f959c" stroke="#777" stroke-width="0.6"/><ellipse cx="140" cy="580" rx="8" ry="1.3" fill="#bbb"/><rect x="144" y="591" width="14" height="18" fill="#f1f1f1" stroke="#bbb" stroke-width="0.8" transform="rotate(-10 151 600)"/><rect x="149.5" y="595" width="15" height="16.5" fill="#8b99a5" stroke="#fff" stroke-width="1.3"/><circle cx="80" cy="604" r="15.2" fill="#f4f4f4"/><path d="M67.5,604.5 L75,598.5 L75,601.5 L84,601.5 C86.5,601.3 89,600 91.5,598 C90.5,603 88,606.5 83,606.8 L75,606.8 L75,610.5z" fill="url(#gUndo)"/><circle cx="111.6" cy="604" r="13.4" fill="#9c9c9c"/><path d="M123,603 L116.5,598 L117,601.5 C110,601.5 104,603 100.5,608.5 C103,605.5 109,605.5 117,606 L116.5,610z" fill="#dedede"/><circle cx="13.4" cy="542.8" r="9.2" fill="#c9c9c9"/><circle cx="13.4" cy="542.8" r="7.8" fill="#d0d0d0"/><path d="M10.5,538.8 L10.5,548 C10.5,549.5 19,549.5 19,548 L19,538.8z" fill="url(#gCan)"/><ellipse cx="14.8" cy="538.8" rx="4.3" ry="1.2" fill="#888"/><path d="M13,540.5 C9.5,540.5 8.5,544 9.5,546" fill="none" stroke="#777" stroke-width="0.7"/><circle cx="14.7" cy="566.4" r="7.6" fill="#d2d2d2"/><circle cx="14.7" cy="566.4" r="5.4" fill="#1799da"/><rect x="0" y="199" width="70" height="302" fill="#efefef"/><rect x="69.5" y="199" width="1" height="302" fill="#c9c9c9"/><rect x="0" y="500.5" width="70" height="1" fill="#c9c9c9"/><rect x="0" y="199" width="70" height="1" fill="#d0d0d0"/><rect x="0" y="199.5" width="69.5" height="15.5" fill="#e4e6e9"/><rect x="0" y="215" width="69.5" height="1" fill="#d6d6d6"/><circle cx="61" cy="208" r="4.8" fill="#dcdcdc" stroke="#c6c6c6" stroke-width="0.8"/><rect x="0" y="216" width="69.5" height="33.5" fill="url(#gPal2)"/><rect x="0" y="249.5" width="69.5" height="1" fill="#d8d8d8"/><g stroke="#555" stroke-width="1" fill="#f3f3f3"><path d="M11,230.5 h13 M11,237 h13" fill="none"/><rect x="14" y="228" width="2.4" height="5" rx="1"/><rect x="19" y="234.5" width="2.4" height="5" rx="1"/></g><g stroke="#555" stroke-width="1" fill="none"><rect x="44.5" y="228.5" width="15" height="3.5"/><rect x="44.5" y="235" width="4" height="3.5"/><rect x="50" y="235" width="4" height="3.5"/><rect x="55.5" y="235" width="4" height="3.5"/></g><rect x="0" y="491" width="69.5" height="9.5" fill="#e4e6e9"/><rect x="0" y="491" width="69.5" height="1" fill="#d4d4d4"/><rect x="28" y="497" width="14" height="1" fill="#999"/><rect x="37" y="321.5" width="30.5" height="30" rx="3" fill="url(#gSel)" stroke="#4a8fd8" stroke-width="1"/><path d="M18,256 L12,273 L24,273z" fill="#eee2d0"/><path d="M18,256 L16,262 L20,262z" fill="#222"/><rect x="11.5" y="273" width="13" height="9" fill="#333"/><rect x="11.5" y="272.5" width="13" height="2.5" fill="#aaa"/><path d="M49,256 L55,256 L57,268 L62,274 L62,282 L42,282 L42,274 L47,268z" fill="url(#gMetal)"/><rect x="42" y="276" width="20" height="3" fill="#333"/><path d="M16,290 L21,291.5 L21,297 L14,297z" fill="#ddd" stroke="#444" stroke-width="0.8"/><path d="M13,297 L23,297 L24,304 L28,309 L28,317 L8,317 L8,309 L12,304z" fill="#333"/><rect x="8" y="310" width="20" height="6" fill="url(#gMetal)"/><path d="M47,298 L56,290 L56,303 L47,303z" fill="#999"/><rect x="47" y="303" width="9.5" height="14" fill="url(#gMetal)"/><path d="M18,323 L21,326 L24,340 L24,351 L12,351 L12,340 L15,326z" fill="url(#gMetal)"/><rect x="12" y="343" width="12" height="8" fill="#333"/><path d="M52,324 C55,330 56,337 55,342 L49,342 C48,337 49,330 52,324z" fill="#7d6a5a"/><path d="M48,342 L56,342 L57,350 L47,350z" fill="url(#gMetal)"/><path d="M18,361 L21,370 L22,378 L22,386 L14,386 L14,378 L15,370z" fill="#333"/><rect x="14" y="378" width="8" height="8" fill="url(#gMetal)"/><path d="M52,360 C57,366 58,374 56,380 L58,385 L46,385 L48,380 C46,374 47,366 52,360z" fill="url(#gMetal)"/><rect x="46" y="383" width="12" height="3" fill="#333"/><path d="M18,393 C22,398 27,410 27.5,417 L8.5,417 C9,410 14,398 18,393z" fill="url(#gBlueTri)" stroke="#5b93c8" stroke-width="1"/><path d="M52,393 C55,400 59,405 59,410 A7,7 0 0 1 45,410 C45,405 49,400 52,393z" fill="url(#gBlueTri)" stroke="#5b93c8" stroke-width="1"/><path d="M18,427.5 L27.5,451.5 L8.5,451.5z" fill="url(#gBlueTri)" stroke="#5b93c8" stroke-width="1"/><rect x="40" y="429" width="24" height="10" fill="#eee" stroke="#bbb" stroke-width="0.6"/><rect x="40" y="439" width="24" height="13" fill="url(#gMetal)"/><path d="M6,474 C6,468 10,466.5 18,466.5 C26,466.5 30,468 30,474 L30,486.5 L6,486.5z" fill="url(#gMetal)"/><path d="M7,474 C7,469 10,467.5 18,467.5 C26,467.5 29,469 29,474z" fill="#eee"/><rect x="927" y="70.5" width="172" height="548" fill="#f7f7f7"/><rect x="927" y="70.5" width="1" height="548" fill="#c8c8c8"/><rect x="927" y="70.5" width="172" height="17" fill="#e7e8ea"/><rect x="927" y="87" width="172" height="1" fill="#d4d4d4"/><text x="1014" y="82.8" font-family='"Liberation Sans", sans-serif' font-size="10.2" fill="#111" text-anchor="middle">Color Editor</text><circle cx="1092.5" cy="79" r="5" fill="#d8d8d8" stroke="#c4c4c4" stroke-width="0.8"/><rect x="960" y="100.5" width="123" height="17" rx="3" fill="#1799da"/><line x1="941" y1="140" x2="947" y2="135" stroke="#777" stroke-width="1.5"/><path d="M1090.70,203.80 A76.5,76.5 0 0 0 1090.52,198.60 L1066.58,200.23 A52.5,52.5 0 0 1 1066.70,203.80z" fill="hsl(1,100%,50%)"/><path d="M1090.60,199.80 A76.5,76.5 0 0 0 1090.15,194.61 L1066.32,197.49 A52.5,52.5 0 0 1 1066.63,201.05z" fill="hsl(2,100%,50%)"/><path d="M1090.28,195.80 A76.5,76.5 0 0 0 1089.56,190.65 L1065.92,194.77 A52.5,52.5 0 0 1 1066.41,198.31z" fill="hsl(4,100%,50%)"/><path d="M1089.76,191.83 A76.5,76.5 0 0 0 1088.77,186.72 L1065.37,192.08 A52.5,52.5 0 0 1 1066.05,195.59z" fill="hsl(6,100%,50%)"/><path d="M1089.03,187.89 A76.5,76.5 0 0 0 1087.77,182.84 L1064.69,189.42 A52.5,52.5 0 0 1 1065.55,192.88z" fill="hsl(8,100%,50%)"/><path d="M1088.09,184.00 A76.5,76.5 0 0 0 1086.58,179.02 L1063.87,186.79 A52.5,52.5 0 0 1 1064.91,190.21z" fill="hsl(9,100%,50%)"/><path d="M1086.96,180.16 A76.5,76.5 0 0 0 1085.18,175.27 L1062.91,184.22 A52.5,52.5 0 0 1 1064.13,187.58z" fill="hsl(11,100%,50%)"/><path d="M1085.62,176.38 A76.5,76.5 0 0 0 1083.59,171.59 L1061.82,181.70 A52.5,52.5 0 0 1 1063.21,184.99z" fill="hsl(12,100%,50%)"/><path d="M1084.09,172.68 A76.5,76.5 0 0 0 1081.81,168.00 L1060.60,179.23 A52.5,52.5 0 0 1 1062.16,182.45z" fill="hsl(14,100%,50%)"/><path d="M1082.36,169.07 A76.5,76.5 0 0 0 1079.84,164.51 L1059.25,176.84 A52.5,52.5 0 0 1 1060.98,179.97z" fill="hsl(16,100%,50%)"/><path d="M1080.45,165.55 A76.5,76.5 0 0 0 1077.70,161.13 L1057.78,174.52 A52.5,52.5 0 0 1 1059.67,177.55z" fill="hsl(18,100%,50%)"/><path d="M1078.36,162.14 A76.5,76.5 0 0 0 1075.38,157.87 L1056.18,172.28 A52.5,52.5 0 0 1 1058.23,175.21z" fill="hsl(19,100%,50%)"/><path d="M1076.09,158.83 A76.5,76.5 0 0 0 1072.89,154.73 L1054.48,170.12 A52.5,52.5 0 0 1 1056.67,172.94z" fill="hsl(21,100%,50%)"/><path d="M1073.65,155.66 A76.5,76.5 0 0 0 1070.24,151.72 L1052.66,168.06 A52.5,52.5 0 0 1 1055.00,170.76z" fill="hsl(22,100%,50%)"/><path d="M1071.05,152.61 A76.5,76.5 0 0 0 1067.44,148.86 L1050.74,166.10 A52.5,52.5 0 0 1 1053.22,168.67z" fill="hsl(24,100%,50%)"/><path d="M1068.29,149.71 A76.5,76.5 0 0 0 1064.49,146.15 L1048.71,164.24 A52.5,52.5 0 0 1 1051.32,166.68z" fill="hsl(26,100%,50%)"/><path d="M1065.39,146.95 A76.5,76.5 0 0 0 1061.40,143.60 L1046.59,162.49 A52.5,52.5 0 0 1 1049.33,164.78z" fill="hsl(26,100%,50%)"/><path d="M1062.34,144.35 A76.5,76.5 0 0 0 1058.19,141.21 L1044.39,160.85 A52.5,52.5 0 0 1 1047.24,163.00z" fill="hsl(28,100%,50%)"/><path d="M1059.17,141.91 A76.5,76.5 0 0 0 1054.85,139.00 L1042.10,159.33 A52.5,52.5 0 0 1 1045.06,161.33z" fill="hsl(28,100%,50%)"/><path d="M1055.86,139.64 A76.5,76.5 0 0 0 1051.40,136.96 L1039.73,157.93 A52.5,52.5 0 0 1 1042.79,159.77z" fill="hsl(30,100%,50%)"/><path d="M1052.45,137.55 A76.5,76.5 0 0 0 1047.86,135.10 L1037.30,156.65 A52.5,52.5 0 0 1 1040.45,158.33z" fill="hsl(30,100%,50%)"/><path d="M1048.93,135.64 A76.5,76.5 0 0 0 1044.21,133.43 L1034.80,155.51 A52.5,52.5 0 0 1 1038.03,157.02z" fill="hsl(32,100%,50%)"/><path d="M1045.32,133.91 A76.5,76.5 0 0 0 1040.49,131.96 L1032.24,154.50 A52.5,52.5 0 0 1 1035.55,155.84z" fill="hsl(32,100%,50%)"/><path d="M1041.62,132.38 A76.5,76.5 0 0 0 1036.69,130.68 L1029.64,153.62 A52.5,52.5 0 0 1 1033.01,154.79z" fill="hsl(34,100%,50%)"/><path d="M1037.84,131.04 A76.5,76.5 0 0 0 1032.84,129.60 L1026.99,152.88 A52.5,52.5 0 0 1 1030.42,153.87z" fill="hsl(34,100%,50%)"/><path d="M1034.00,129.91 A76.5,76.5 0 0 0 1028.93,128.73 L1024.31,152.28 A52.5,52.5 0 0 1 1027.79,153.09z" fill="hsl(36,100%,50%)"/><path d="M1030.11,128.97 A76.5,76.5 0 0 0 1024.98,128.06 L1021.60,151.82 A52.5,52.5 0 0 1 1025.12,152.45z" fill="hsl(36,100%,50%)"/><path d="M1026.17,128.24 A76.5,76.5 0 0 0 1021.00,127.60 L1018.87,151.51 A52.5,52.5 0 0 1 1022.41,151.95z" fill="hsl(38,100%,50%)"/><path d="M1022.20,127.72 A76.5,76.5 0 0 0 1017.00,127.35 L1016.12,151.34 A52.5,52.5 0 0 1 1019.69,151.59z" fill="hsl(38,100%,50%)"/><path d="M1018.20,127.40 A76.5,76.5 0 0 0 1013.00,127.31 L1013.38,151.31 A52.5,52.5 0 0 1 1016.95,151.37z" fill="hsl(40,100%,50%)"/><path d="M1014.20,127.30 A76.5,76.5 0 0 0 1009.00,127.48 L1010.63,151.42 A52.5,52.5 0 0 1 1014.20,151.30z" fill="hsl(41,100%,50%)"/><path d="M1010.20,127.40 A76.5,76.5 0 0 0 1005.01,127.85 L1007.89,151.68 A52.5,52.5 0 0 1 1011.45,151.37z" fill="hsl(42,100%,50%)"/><path d="M1006.20,127.72 A76.5,76.5 0 0 0 1001.05,128.44 L1005.17,152.08 A52.5,52.5 0 0 1 1008.71,151.59z" fill="hsl(43,100%,50%)"/><path d="M1002.23,128.24 A76.5,76.5 0 0 0 997.12,129.23 L1002.48,152.63 A52.5,52.5 0 0 1 1005.99,151.95z" fill="hsl(45,100%,50%)"/><path d="M998.29,128.97 A76.5,76.5 0 0 0 993.24,130.23 L999.82,153.31 A52.5,52.5 0 0 1 1003.28,152.45z" fill="hsl(46,100%,50%)"/><path d="M994.40,129.91 A76.5,76.5 0 0 0 989.42,131.42 L997.19,154.13 A52.5,52.5 0 0 1 1000.61,153.09z" fill="hsl(47,100%,50%)"/><path d="M990.56,131.04 A76.5,76.5 0 0 0 985.67,132.82 L994.62,155.09 A52.5,52.5 0 0 1 997.98,153.87z" fill="hsl(49,100%,50%)"/><path d="M986.78,132.38 A76.5,76.5 0 0 0 981.99,134.41 L992.10,156.18 A52.5,52.5 0 0 1 995.39,154.79z" fill="hsl(50,100%,50%)"/><path d="M983.08,133.91 A76.5,76.5 0 0 0 978.40,136.19 L989.63,157.40 A52.5,52.5 0 0 1 992.85,155.84z" fill="hsl(51,100%,50%)"/><path d="M979.47,135.64 A76.5,76.5 0 0 0 974.91,138.16 L987.24,158.75 A52.5,52.5 0 0 1 990.37,157.02z" fill="hsl(53,100%,50%)"/><path d="M975.95,137.55 A76.5,76.5 0 0 0 971.53,140.30 L984.92,160.22 A52.5,52.5 0 0 1 987.95,158.33z" fill="hsl(54,100%,50%)"/><path d="M972.54,139.64 A76.5,76.5 0 0 0 968.27,142.62 L982.68,161.82 A52.5,52.5 0 0 1 985.61,159.77z" fill="hsl(55,100%,50%)"/><path d="M969.23,141.91 A76.5,76.5 0 0 0 965.13,145.11 L980.52,163.52 A52.5,52.5 0 0 1 983.34,161.33z" fill="hsl(57,100%,50%)"/><path d="M966.06,144.35 A76.5,76.5 0 0 0 962.12,147.76 L978.46,165.34 A52.5,52.5 0 0 1 981.16,163.00z" fill="hsl(58,100%,50%)"/><path d="M963.01,146.95 A76.5,76.5 0 0 0 959.26,150.56 L976.50,167.26 A52.5,52.5 0 0 1 979.07,164.78z" fill="hsl(59,100%,50%)"/><path d="M960.11,149.71 A76.5,76.5 0 0 0 956.55,153.51 L974.64,169.29 A52.5,52.5 0 0 1 977.08,166.68z" fill="hsl(62,100%,50%)"/><path d="M957.35,152.61 A76.5,76.5 0 0 0 954.00,156.60 L972.89,171.41 A52.5,52.5 0 0 1 975.18,168.67z" fill="hsl(65,100%,50%)"/><path d="M954.75,155.66 A76.5,76.5 0 0 0 951.61,159.81 L971.25,173.61 A52.5,52.5 0 0 1 973.40,170.76z" fill="hsl(68,100%,50%)"/><path d="M952.31,158.83 A76.5,76.5 0 0 0 949.40,163.15 L969.73,175.90 A52.5,52.5 0 0 1 971.73,172.94z" fill="hsl(72,100%,50%)"/><path d="M950.04,162.14 A76.5,76.5 0 0 0 947.36,166.60 L968.33,178.27 A52.5,52.5 0 0 1 970.17,175.21z" fill="hsl(75,100%,50%)"/><path d="M947.95,165.55 A76.5,76.5 0 0 0 945.50,170.14 L967.05,180.70 A52.5,52.5 0 0 1 968.73,177.55z" fill="hsl(78,100%,50%)"/><path d="M946.04,169.07 A76.5,76.5 0 0 0 943.83,173.79 L965.91,183.20 A52.5,52.5 0 0 1 967.42,179.97z" fill="hsl(82,100%,50%)"/><path d="M944.31,172.68 A76.5,76.5 0 0 0 942.36,177.51 L964.90,185.76 A52.5,52.5 0 0 1 966.24,182.45z" fill="hsl(85,100%,50%)"/><path d="M942.78,176.38 A76.5,76.5 0 0 0 941.08,181.31 L964.02,188.36 A52.5,52.5 0 0 1 965.19,184.99z" fill="hsl(88,100%,50%)"/><path d="M941.44,180.16 A76.5,76.5 0 0 0 940.00,185.16 L963.28,191.01 A52.5,52.5 0 0 1 964.27,187.58z" fill="hsl(92,100%,50%)"/><path d="M940.31,184.00 A76.5,76.5 0 0 0 939.13,189.07 L962.68,193.69 A52.5,52.5 0 0 1 963.49,190.21z" fill="hsl(95,100%,50%)"/><path d="M939.37,187.89 A76.5,76.5 0 0 0 938.46,193.02 L962.22,196.40 A52.5,52.5 0 0 1 962.85,192.88z" fill="hsl(98,100%,50%)"/><path d="M938.64,191.83 A76.5,76.5 0 0 0 938.00,197.00 L961.91,199.13 A52.5,52.5 0 0 1 962.35,195.59z" fill="hsl(102,100%,50%)"/><path d="M938.12,195.80 A76.5,76.5 0 0 0 937.75,201.00 L961.74,201.88 A52.5,52.5 0 0 1 961.99,198.31z" fill="hsl(105,100%,50%)"/><path d="M937.80,199.80 A76.5,76.5 0 0 0 937.71,205.00 L961.71,204.62 A52.5,52.5 0 0 1 961.77,201.05z" fill="hsl(108,100%,50%)"/><path d="M937.70,203.80 A76.5,76.5 0 0 0 937.88,209.00 L961.82,207.37 A52.5,52.5 0 0 1 961.70,203.80z" fill="hsl(113,100%,50%)"/><path d="M937.80,207.80 A76.5,76.5 0 0 0 938.25,212.99 L962.08,210.11 A52.5,52.5 0 0 1 961.77,206.55z" fill="hsl(118,100%,50%)"/><path d="M938.12,211.80 A76.5,76.5 0 0 0 938.84,216.95 L962.48,212.83 A52.5,52.5 0 0 1 961.99,209.29z" fill="hsl(123,100%,50%)"/><path d="M938.64,215.77 A76.5,76.5 0 0 0 939.63,220.88 L963.03,215.52 A52.5,52.5 0 0 1 962.35,212.01z" fill="hsl(129,100%,50%)"/><path d="M939.37,219.71 A76.5,76.5 0 0 0 940.63,224.76 L963.71,218.18 A52.5,52.5 0 0 1 962.85,214.72z" fill="hsl(134,100%,50%)"/><path d="M940.31,223.60 A76.5,76.5 0 0 0 941.82,228.58 L964.53,220.81 A52.5,52.5 0 0 1 963.49,217.39z" fill="hsl(139,100%,50%)"/><path d="M941.44,227.44 A76.5,76.5 0 0 0 943.22,232.33 L965.49,223.38 A52.5,52.5 0 0 1 964.27,220.02z" fill="hsl(145,100%,50%)"/><path d="M942.78,231.22 A76.5,76.5 0 0 0 944.81,236.01 L966.58,225.90 A52.5,52.5 0 0 1 965.19,222.61z" fill="hsl(150,100%,50%)"/><path d="M944.31,234.92 A76.5,76.5 0 0 0 946.59,239.60 L967.80,228.37 A52.5,52.5 0 0 1 966.24,225.15z" fill="hsl(155,100%,50%)"/><path d="M946.04,238.53 A76.5,76.5 0 0 0 948.56,243.09 L969.15,230.76 A52.5,52.5 0 0 1 967.42,227.63z" fill="hsl(161,100%,50%)"/><path d="M947.95,242.05 A76.5,76.5 0 0 0 950.70,246.47 L970.62,233.08 A52.5,52.5 0 0 1 968.73,230.05z" fill="hsl(166,100%,50%)"/><path d="M950.04,245.46 A76.5,76.5 0 0 0 953.02,249.73 L972.22,235.32 A52.5,52.5 0 0 1 970.17,232.39z" fill="hsl(171,100%,50%)"/><path d="M952.31,248.77 A76.5,76.5 0 0 0 955.51,252.87 L973.92,237.48 A52.5,52.5 0 0 1 971.73,234.66z" fill="hsl(177,100%,50%)"/><path d="M954.75,251.94 A76.5,76.5 0 0 0 958.16,255.88 L975.74,239.54 A52.5,52.5 0 0 1 973.40,236.84z" fill="hsl(182,100%,50%)"/><path d="M957.35,254.99 A76.5,76.5 0 0 0 960.96,258.74 L977.66,241.50 A52.5,52.5 0 0 1 975.18,238.93z" fill="hsl(187,100%,50%)"/><path d="M960.11,257.89 A76.5,76.5 0 0 0 963.91,261.45 L979.69,243.36 A52.5,52.5 0 0 1 977.08,240.92z" fill="hsl(192,100%,50%)"/><path d="M963.01,260.65 A76.5,76.5 0 0 0 967.00,264.00 L981.81,245.11 A52.5,52.5 0 0 1 979.07,242.82z" fill="hsl(195,100%,50%)"/><path d="M966.06,263.25 A76.5,76.5 0 0 0 970.21,266.39 L984.01,246.75 A52.5,52.5 0 0 1 981.16,244.60z" fill="hsl(198,100%,50%)"/><path d="M969.23,265.69 A76.5,76.5 0 0 0 973.55,268.60 L986.30,248.27 A52.5,52.5 0 0 1 983.34,246.27z" fill="hsl(202,100%,50%)"/><path d="M972.54,267.96 A76.5,76.5 0 0 0 977.00,270.64 L988.67,249.67 A52.5,52.5 0 0 1 985.61,247.83z" fill="hsl(205,100%,50%)"/><path d="M975.95,270.05 A76.5,76.5 0 0 0 980.54,272.50 L991.10,250.95 A52.5,52.5 0 0 1 987.95,249.27z" fill="hsl(208,100%,50%)"/><path d="M979.47,271.96 A76.5,76.5 0 0 0 984.19,274.17 L993.60,252.09 A52.5,52.5 0 0 1 990.37,250.58z" fill="hsl(212,100%,50%)"/><path d="M983.08,273.69 A76.5,76.5 0 0 0 987.91,275.64 L996.16,253.10 A52.5,52.5 0 0 1 992.85,251.76z" fill="hsl(215,100%,50%)"/><path d="M986.78,275.22 A76.5,76.5 0 0 0 991.71,276.92 L998.76,253.98 A52.5,52.5 0 0 1 995.39,252.81z" fill="hsl(218,100%,50%)"/><path d="M990.56,276.56 A76.5,76.5 0 0 0 995.56,278.00 L1001.41,254.72 A52.5,52.5 0 0 1 997.98,253.73z" fill="hsl(222,100%,50%)"/><path d="M994.40,277.69 A76.5,76.5 0 0 0 999.47,278.87 L1004.09,255.32 A52.5,52.5 0 0 1 1000.61,254.51z" fill="hsl(225,100%,50%)"/><path d="M998.29,278.63 A76.5,76.5 0 0 0 1003.42,279.54 L1006.80,255.78 A52.5,52.5 0 0 1 1003.28,255.15z" fill="hsl(228,100%,50%)"/><path d="M1002.23,279.36 A76.5,76.5 0 0 0 1007.40,280.00 L1009.53,256.09 A52.5,52.5 0 0 1 1005.99,255.65z" fill="hsl(232,100%,50%)"/><path d="M1006.20,279.88 A76.5,76.5 0 0 0 1011.40,280.25 L1012.28,256.26 A52.5,52.5 0 0 1 1008.71,256.01z" fill="hsl(235,100%,50%)"/><path d="M1010.20,280.20 A76.5,76.5 0 0 0 1015.40,280.29 L1015.02,256.29 A52.5,52.5 0 0 1 1011.45,256.23z" fill="hsl(238,100%,50%)"/><path d="M1014.20,280.30 A76.5,76.5 0 0 0 1019.40,280.12 L1017.77,256.18 A52.5,52.5 0 0 1 1014.20,256.30z" fill="hsl(242,100%,50%)"/><path d="M1018.20,280.20 A76.5,76.5 0 0 0 1023.39,279.75 L1020.51,255.92 A52.5,52.5 0 0 1 1016.95,256.23z" fill="hsl(244,100%,50%)"/><path d="M1022.20,279.88 A76.5,76.5 0 0 0 1027.35,279.16 L1023.23,255.52 A52.5,52.5 0 0 1 1019.69,256.01z" fill="hsl(248,100%,50%)"/><path d="M1026.17,279.36 A76.5,76.5 0 0 0 1031.28,278.37 L1025.92,254.97 A52.5,52.5 0 0 1 1022.41,255.65z" fill="hsl(250,100%,50%)"/><path d="M1030.11,278.63 A76.5,76.5 0 0 0 1035.16,277.37 L1028.58,254.29 A52.5,52.5 0 0 1 1025.12,255.15z" fill="hsl(254,100%,50%)"/><path d="M1034.00,277.69 A76.5,76.5 0 0 0 1038.98,276.18 L1031.21,253.47 A52.5,52.5 0 0 1 1027.79,254.51z" fill="hsl(256,100%,50%)"/><path d="M1037.84,276.56 A76.5,76.5 0 0 0 1042.73,274.78 L1033.78,252.51 A52.5,52.5 0 0 1 1030.42,253.73z" fill="hsl(260,100%,50%)"/><path d="M1041.62,275.22 A76.5,76.5 0 0 0 1046.41,273.19 L1036.30,251.42 A52.5,52.5 0 0 1 1033.01,252.81z" fill="hsl(262,100%,50%)"/><path d="M1045.32,273.69 A76.5,76.5 0 0 0 1050.00,271.41 L1038.77,250.20 A52.5,52.5 0 0 1 1035.55,251.76z" fill="hsl(266,100%,50%)"/><path d="M1048.93,271.96 A76.5,76.5 0 0 0 1053.49,269.44 L1041.16,248.85 A52.5,52.5 0 0 1 1038.03,250.58z" fill="hsl(268,100%,50%)"/><path d="M1052.45,270.05 A76.5,76.5 0 0 0 1056.87,267.30 L1043.48,247.38 A52.5,52.5 0 0 1 1040.45,249.27z" fill="hsl(272,100%,50%)"/><path d="M1055.86,267.96 A76.5,76.5 0 0 0 1060.13,264.98 L1045.72,245.78 A52.5,52.5 0 0 1 1042.79,247.83z" fill="hsl(274,100%,50%)"/><path d="M1059.17,265.69 A76.5,76.5 0 0 0 1063.27,262.49 L1047.88,244.08 A52.5,52.5 0 0 1 1045.06,246.27z" fill="hsl(278,100%,50%)"/><path d="M1062.34,263.25 A76.5,76.5 0 0 0 1066.28,259.84 L1049.94,242.26 A52.5,52.5 0 0 1 1047.24,244.60z" fill="hsl(280,100%,50%)"/><path d="M1065.39,260.65 A76.5,76.5 0 0 0 1069.14,257.04 L1051.90,240.34 A52.5,52.5 0 0 1 1049.33,242.82z" fill="hsl(284,100%,50%)"/><path d="M1068.29,257.89 A76.5,76.5 0 0 0 1071.85,254.09 L1053.76,238.31 A52.5,52.5 0 0 1 1051.32,240.92z" fill="hsl(288,100%,50%)"/><path d="M1071.05,254.99 A76.5,76.5 0 0 0 1074.40,251.00 L1055.51,236.19 A52.5,52.5 0 0 1 1053.22,238.93z" fill="hsl(292,100%,50%)"/><path d="M1073.65,251.94 A76.5,76.5 0 0 0 1076.79,247.79 L1057.15,233.99 A52.5,52.5 0 0 1 1055.00,236.84z" fill="hsl(298,100%,50%)"/><path d="M1076.09,248.77 A76.5,76.5 0 0 0 1079.00,244.45 L1058.67,231.70 A52.5,52.5 0 0 1 1056.67,234.66z" fill="hsl(302,100%,50%)"/><path d="M1078.36,245.46 A76.5,76.5 0 0 0 1081.04,241.00 L1060.07,229.33 A52.5,52.5 0 0 1 1058.23,232.39z" fill="hsl(308,100%,50%)"/><path d="M1080.45,242.05 A76.5,76.5 0 0 0 1082.90,237.46 L1061.35,226.90 A52.5,52.5 0 0 1 1059.67,230.05z" fill="hsl(312,100%,50%)"/><path d="M1082.36,238.53 A76.5,76.5 0 0 0 1084.57,233.81 L1062.49,224.40 A52.5,52.5 0 0 1 1060.98,227.63z" fill="hsl(318,100%,50%)"/><path d="M1084.09,234.92 A76.5,76.5 0 0 0 1086.04,230.09 L1063.50,221.84 A52.5,52.5 0 0 1 1062.16,225.15z" fill="hsl(322,100%,50%)"/><path d="M1085.62,231.22 A76.5,76.5 0 0 0 1087.32,226.29 L1064.38,219.24 A52.5,52.5 0 0 1 1063.21,222.61z" fill="hsl(328,100%,50%)"/><path d="M1086.96,227.44 A76.5,76.5 0 0 0 1088.40,222.44 L1065.12,216.59 A52.5,52.5 0 0 1 1064.13,220.02z" fill="hsl(332,100%,50%)"/><path d="M1088.09,223.60 A76.5,76.5 0 0 0 1089.27,218.53 L1065.72,213.91 A52.5,52.5 0 0 1 1064.91,217.39z" fill="hsl(338,100%,50%)"/><path d="M1089.03,219.71 A76.5,76.5 0 0 0 1089.94,214.58 L1066.18,211.20 A52.5,52.5 0 0 1 1065.55,214.72z" fill="hsl(342,100%,50%)"/><path d="M1089.76,215.77 A76.5,76.5 0 0 0 1090.40,210.60 L1066.49,208.47 A52.5,52.5 0 0 1 1066.05,212.01z" fill="hsl(348,100%,50%)"/><path d="M1090.28,211.80 A76.5,76.5 0 0 0 1090.65,206.60 L1066.66,205.72 A52.5,52.5 0 0 1 1066.41,209.29z" fill="hsl(352,100%,50%)"/><path d="M1090.60,207.80 A76.5,76.5 0 0 0 1090.69,202.60 L1066.69,202.98 A52.5,52.5 0 0 1 1066.63,206.55z" fill="hsl(358,100%,50%)"/><defs><linearGradient id="dV" x1="0" y1="0" x2="0" y2="1"><stop offset="0" stop-color="#fff" stop-opacity="1"/><stop offset="0.5" stop-color="#808080" stop-opacity="0"/><stop offset="1" stop-color="#000" stop-opacity="1"/></linearGradient><linearGradient id="dH" x1="0" y1="0" x2="1" y2="0"><stop offset="0" stop-color="#7a7a7a"/><stop offset="1" stop-color="#1aa3e8"/></linearGradient></defs><path d="M1014.2,159.3 L1058.9,203.8 L1014.2,248.3 L969.5,203.8z" fill="url(#dH)"/><path d="M1014.2,159.3 L1058.9,203.8 L1014.2,248.3 L969.5,203.8z" fill="url(#dV)"/><circle cx="1040.4" cy="206.5" r="5" fill="#2a9fd8" stroke="#fff" stroke-width="1.2"/><circle cx="1040.4" cy="206.5" r="6" fill="none" stroke="#333" stroke-width="0.8"/><circle cx="967.6" cy="248" r="5" fill="#1aa8ea" stroke="#fff" stroke-width="1.2"/><circle cx="967.6" cy="248" r="6" fill="none" stroke="#333" stroke-width="0.8"/><circle cx="1055" cy="133" r="0.8" fill="#666"/><circle cx="932.4" cy="203.6" r="0.8" fill="#666"/><circle cx="1094.9" cy="203.6" r="0.8" fill="#666"/><circle cx="972.6" cy="273.8" r="0.8" fill="#666"/><circle cx="1054" cy="273.8" r="0.8" fill="#666"/><circle cx="947" cy="273.8" r="9.6" fill="#ededed" stroke="#dadada" stroke-width="0.9"/><path d="M941,276 L941,271.5 C941,270.5 954,270.5 954,271.5 L954,276z" fill="#f5f5f5" stroke="#c4c4c4" stroke-width="0.5"/><rect x="941" y="276" width="13" height="1.2" fill="#111"/><path d="M941,277 L951,277 L951,281 L942,281 C941.3,280 941,279 941,277z" fill="url(#gMetal)"/><path d="M951,277 L954,277 C954,279.5 953,281 951,281z" fill="#111"/><g stroke="#555" stroke-width="1" fill="#f7f7f7"><path d="M1075,271 h13 M1075,277.5 h13" fill="none"/><rect x="1077.5" y="268.5" width="2.5" height="5" rx="1"/><rect x="1083" y="275" width="2.5" height="5" rx="1"/></g><rect x="927.5" y="291.5" width="171.5" height="10" fill="#e7e8ea"/><rect x="927.5" y="291" width="171.5" height="1" fill="#d0d0d0"/><rect x="927.5" y="301" width="171.5" height="1" fill="#d0d0d0"/><rect x="1007.5" y="297" width="15" height="1" fill="#999"/><rect x="1083.5" y="302" width="15.5" height="316" fill="#fbfbfb"/><rect x="1083" y="302" width="1" height="316" fill="#d2d2d2"/><rect x="928" y="357.1" width="155" height="1" fill="#d6d6d6"/><path d="M934.7,310.1 C938.5,304.6 944.5,304.6 948.3,310.1 C944.5,315.6 938.5,315.6 934.7,310.1z" fill="#707070"/><circle cx="941.5" cy="310.1" r="3.1" fill="#f7f7f7"/><circle cx="941.5" cy="310.1" r="1.9" fill="#707070"/><circle cx="941.6" cy="345.0" r="5" fill="#ececec" stroke="#d6d6d6" stroke-width="0.8"/><text x="957.5" y="348.5" font-family='"Liberation Sans", sans-serif' font-size="10.4" fill="#1a1a1a" stroke="#1a1a1a" stroke-width="0.25">Layer5</text><rect x="928" y="414.90000000000003" width="155" height="1" fill="#d6d6d6"/><path d="M934.7,367.90000000000003 C938.5,362.40000000000003 944.5,362.40000000000003 948.3,367.90000000000003 C944.5,373.40000000000003 938.5,373.40000000000003 934.7,367.90000000000003z" fill="#707070"/><circle cx="941.5" cy="367.90000000000003" r="3.1" fill="#f7f7f7"/><circle cx="941.5" cy="367.90000000000003" r="1.9" fill="#707070"/><circle cx="941.6" cy="402.8" r="5" fill="#ececec" stroke="#d6d6d6" stroke-width="0.8"/><text x="957.5" y="406.3" font-family='"Liberation Sans", sans-serif' font-size="10.4" fill="#1a1a1a" stroke="#1a1a1a" stroke-width="0.25">Layer17</text><rect x="928" y="472.70000000000005" width="155" height="1" fill="#d6d6d6"/><path d="M934.7,425.70000000000005 C938.5,420.20000000000005 944.5,420.20000000000005 948.3,425.70000000000005 C944.5,431.20000000000005 938.5,431.20000000000005 934.7,425.70000000000005z" fill="#707070"/><circle cx="941.5" cy="425.70000000000005" r="3.1" fill="#f7f7f7"/><circle cx="941.5" cy="425.70000000000005" r="1.9" fill="#707070"/><circle cx="941.6" cy="460.6" r="5" fill="#ececec" stroke="#d6d6d6" stroke-width="0.8"/><text x="957.5" y="464.1" font-family='"Liberation Sans", sans-serif' font-size="10.4" fill="#1a1a1a" stroke="#1a1a1a" stroke-width="0.25">Layer10</text><rect x="928" y="530.5" width="155" height="1" fill="#d6d6d6"/><path d="M934.7,483.5 C938.5,478.0 944.5,478.0 948.3,483.5 C944.5,489.0 938.5,489.0 934.7,483.5z" fill="#707070"/><circle cx="941.5" cy="483.5" r="3.1" fill="#f7f7f7"/><circle cx="941.5" cy="483.5" r="1.9" fill="#707070"/><circle cx="941.6" cy="518.4" r="5" fill="#ececec" stroke="#d6d6d6" stroke-width="0.8"/><text x="957.5" y="521.9" font-family='"Liberation Sans", sans-serif' font-size="10.4" fill="#1a1a1a" stroke="#1a1a1a" stroke-width="0.25">Layer11</text><path d="M969,309 C971,305 976,306 980,306.5 C984,306 988,305 989,308 C990,312 988,316 985,318 C982,320 977,319 974,318 C971,317 969,314 969,309z" fill="#6a3e21"/><path d="M965.5,316 C968,320 974,324 980,326 C981,328 980,331 976,331 C970,330 965,327 963.5,323 C963,320 964,317 965.5,316z" fill="#6a3e21"/><path d="M984,322 L988.5,321 L989,325 L985,326.5z" fill="#6a3e21"/><ellipse cx="971" cy="337.5" rx="2.3" ry="1.2" fill="#6a3e21"/><ellipse cx="985.6" cy="337.2" rx="2.3" ry="1.2" fill="#6a3e21"/><g><ellipse cx="963.3" cy="367" rx="2.8" ry="2.2" fill="#dcd530"/><rect x="973" y="362.5" width="5.5" height="6" fill="#4299c7"/><rect x="964" y="384" width="6.5" height="4.5" fill="#4299c7" transform="rotate(-15 967 386)"/><rect x="984.5" y="380" width="3.5" height="6" fill="#8c1a20" transform="rotate(-35 986.8 382.5)"/><ellipse cx="978" cy="393" rx="4.2" ry="2.3" fill="#dcd530" transform="rotate(-15 978 393)"/></g><g><path d="M966.2,422 L981.6,421.5 L979.5,431 L968,431.5z" fill="#7e2b5b"/><path d="M958,444 C962,441 970,440 976,437 C981,435 984,433 986,434 C990,438 993,444 993,449 C990,453 982,453 975,455 C968,455 961,454 958,452z" fill="#7e2b5b"/></g><g><path d="M955,487 L961,483 L967,487 L965,494 L958,495z M983,484 L990,486 L995.5,490 L993,495 L985,494z M957,497 C965,502 980,503 991,497 L992,503 C982,509 967,510 958,504z" fill="#ebbfd9"/></g><rect x="929.5" y="532" width="153" height="55.5" fill="#f8f8f8" stroke="#2f8ff0" stroke-width="1.6"/><rect x="1047" y="532.5" width="9.5" height="54.5" fill="#8cc6f8"/><rect x="1047" y="532" width="9.5" height="2" fill="#2f7fd0"/><rect x="1056.5" y="532.5" width="1" height="54.5" fill="#c8c8c8"/><rect x="1057" y="559" width="25" height="1" fill="#d0d0d0"/><path d="M1065,545 L1069.5,539.5 L1074,545z M1065,547 L1069.5,552.5 L1074,547z" fill="#444"/><path d="M1066.5,571 v-3 a3.5,3.5 0 0 1 7,0" fill="none" stroke="#aaa" stroke-width="1"/><rect x="1066" y="571" width="9" height="7" fill="#f0f0f0" stroke="#aaa" stroke-width="0.8"/><path d="M934.7,540.5 C938.5,535.0 944.5,535.0 948.3,540.5 C944.5,546.0 938.5,546.0 934.7,540.5z" fill="#707070"/><circle cx="941.5" cy="540.5" r="3.1" fill="#f7f7f7"/><circle cx="941.5" cy="540.5" r="1.9" fill="#707070"/><rect x="962.7" y="537" width="25.3" height="33" fill="#1799da"/><circle cx="1006" cy="559" r="6.5" fill="none" stroke="#444" stroke-width="1" stroke-dasharray="0.9 2.6"/><circle cx="941.6" cy="576" r="5" fill="#ececec" stroke="#d6d6d6" stroke-width="0.8"/><text x="957.5" y="579.5" font-family='"Liberation Sans", sans-serif' font-size="10.4" fill="#1a1a1a" stroke="#1a1a1a" stroke-width="0.25">Layer18</text><rect x="928" y="588.5" width="155" height="30" fill="#ebebeb"/><g fill="none" stroke="#666" stroke-width="1.1"><path d="M935,599 C939,593 944,593 948,599 C944,605 939,605 935,599z"/><path d="M935,605 L948,593"/></g><rect x="962.7" y="595" width="25.3" height="23" fill="#d2c1a6"/><rect x="962.7" y="595" width="25.3" height="1.2" fill="#555"/><circle cx="965.0" cy="598.0" r="0.7" fill="#8a7a66"/><circle cx="972.3" cy="603.1" r="0.7" fill="#8a7a66"/><circle cx="979.6" cy="608.2" r="0.7" fill="#8a7a66"/><circle cx="986.9" cy="613.3" r="0.7" fill="#8a7a66"/><circle cx="972.2" cy="599.4" r="0.7" fill="#8a7a66"/><circle cx="979.5" cy="604.5" r="0.7" fill="#8a7a66"/><circle cx="986.8" cy="609.6" r="0.7" fill="#8a7a66"/><circle cx="972.1" cy="614.7" r="0.7" fill="#8a7a66"/><circle cx="979.4" cy="600.8" r="0.7" fill="#8a7a66"/><circle cx="986.7" cy="605.9" r="0.7" fill="#8a7a66"/><circle cx="972.0" cy="611.0" r="0.7" fill="#8a7a66"/><circle cx="979.3" cy="616.1" r="0.7" fill="#8a7a66"/><circle cx="986.6" cy="602.2" r="0.7" fill="#8a7a66"/><circle cx="971.9" cy="607.3" r="0.7" fill="#8a7a66"/><rect x="143" y="70.5" width="809.5" height="37.5" fill="#efefef"/><rect x="143" y="70.5" width="809.5" height="1" fill="#dadada"/><rect x="143" y="71.5" width="14.5" height="36.5" fill="#e9e9e9"/><rect x="938" y="71.5" width="14.5" height="36.5" fill="#e9e9e9"/><rect x="157.4" y="71.5" width="1" height="36.5" fill="#d4d4d4"/><rect x="228.3" y="71.5" width="1" height="36.5" fill="#d4d4d4"/><rect x="267.5" y="71.5" width="1" height="36.5" fill="#d4d4d4"/><rect x="339.8" y="71.5" width="1" height="36.5" fill="#d4d4d4"/><rect x="515.7" y="71.5" width="1" height="36.5" fill="#d4d4d4"/><rect x="691.4" y="71.5" width="1" height="36.5" fill="#d4d4d4"/><rect x="798.6" y="71.5" width="1" height="36.5" fill="#d4d4d4"/><rect x="937.6" y="71.5" width="1" height="36.5" fill="#d4d4d4"/><rect x="952" y="70.5" width="1" height="37.5" fill="#d0d0d0"/><path d="M163.1,89.1 L171.4,83 L171.6,86.2 L182.2,86.2 C184.5,86 186,84.5 186.9,83 C186.5,86 185.5,89 183.5,90.3 C182,91.2 180.5,91.6 179.2,91.6 L171.6,91.6 L171.4,94.8z" fill="url(#gUndo)" stroke="#b8261a" stroke-width="0.5"/><path d="M221.7,89.1 L213.4,83.6 L213.4,86.2 L204,86.4 C200.5,87 198.5,90 198.1,95.1 C199,93 201,91.6 205,91.4 L213.4,91.4 L213.4,95.1z" fill="#b5e0ad"/><circle cx="246" cy="85.5" r="7.6" fill="#fafafa" stroke="#2b2b2b" stroke-width="1.8"/><line x1="251.5" y1="91.5" x2="256" y2="99.5" stroke="#222" stroke-width="2.6" stroke-linecap="round"/><rect x="277.5" y="82.5" width="17" height="13" fill="#fcfcfc" stroke="#333" stroke-width="1.2" stroke-dasharray="2.5 1.5"/><path d="M290,91 L298.5,96.5 L294.5,97 L293,100z" fill="#222"/><rect x="311.5" y="82.5" width="17.5" height="13" fill="none" stroke="#aaa" stroke-width="1" stroke-dasharray="2 1.5"/><path d="M327.5,79 L332.5,84 M332.5,79 L327.5,84" stroke="#e8a0a0" stroke-width="2"/><path d="M353,79.5 V95.5 H369 M349,83.5 H365 V99.5 M353,95.5 L368,80.5" fill="none" stroke="#333" stroke-width="1.8"/><circle cx="392" cy="89" r="7.5" fill="none" stroke="#555" stroke-width="1" stroke-dasharray="1.6 1.2"/><path d="M397,91 V99 M393,95 H401 M397,91 l-1.5,1.8 h3z M397,99 l-1.5,-1.8 h3z M393,95 l1.8,-1.5 v3z M401,95 l-1.8,-1.5 v3z" stroke="#333" stroke-width="1" fill="#333"/><path d="M418.5,81 L433.5,81 L436.5,97 L418.5,97z" fill="none" stroke="#555" stroke-width="1.1"/><circle cx="418.5" cy="81" r="1.8" fill="#fff" stroke="#555" stroke-width="0.9"/><circle cx="433.5" cy="81" r="1.8" fill="#fff" stroke="#555" stroke-width="0.9"/><circle cx="436.5" cy="97" r="1.8" fill="#fff" stroke="#555" stroke-width="0.9"/><circle cx="418.5" cy="97" r="1.8" fill="#fff" stroke="#555" stroke-width="0.9"/><rect x="446.5" y="74" width="30.5" height="30.5" rx="3" fill="url(#gSel)" stroke="#4a8fd8" stroke-width="1"/><path d="M453,79 L453,99 C453,102 471,102 471,99 L471,79z" fill="url(#gCan)"/><ellipse cx="462" cy="79" rx="9" ry="2.6" fill="#9a9a9a" stroke="#666" stroke-width="0.6"/><path d="M460,82 C452,82 449,88 451,93 L453,95" fill="none" stroke="#555" stroke-width="1"/><text x="496.5" y="99.5" font-family='"Liberation Serif", serif' font-size="27" fill="#444" text-anchor="middle">T</text><g transform="rotate(-45 534.5 89.5)"><rect x="521" y="85.5" width="27" height="8" fill="#f9f9f9" stroke="#555" stroke-width="1"/><line x1="523.0" y1="85.5" x2="523.0" y2="89.5" stroke="#666" stroke-width="0.6"/><line x1="525.7" y1="85.5" x2="525.7" y2="88.5" stroke="#666" stroke-width="0.6"/><line x1="528.4" y1="85.5" x2="528.4" y2="89.5" stroke="#666" stroke-width="0.6"/><line x1="531.1" y1="85.5" x2="531.1" y2="88.5" stroke="#666" stroke-width="0.6"/><line x1="533.8" y1="85.5" x2="533.8" y2="89.5" stroke="#666" stroke-width="0.6"/><line x1="536.5" y1="85.5" x2="536.5" y2="88.5" stroke="#666" stroke-width="0.6"/><line x1="539.2" y1="85.5" x2="539.2" y2="89.5" stroke="#666" stroke-width="0.6"/><line x1="541.9" y1="85.5" x2="541.9" y2="88.5" stroke="#666" stroke-width="0.6"/><line x1="544.6" y1="85.5" x2="544.6" y2="89.5" stroke="#666" stroke-width="0.6"/></g><circle cx="569" cy="89" r="10.8" fill="#f6f6f6" stroke="#555" stroke-width="1.1"/><path d="M562,86 h14 M562,92 h14" stroke="#555" stroke-width="1.1"/><path d="M562,86 A7.5,6 0 0 1 576,86z M562,92 A7.5,6 0 0 0 576,92z" fill="#fff" stroke="#555" stroke-width="1"/><path d="M590.5,97 C592,92 598,85 604,80 C610,76 617,77 616.5,83 C616,86 612,85 609,87 C606,89 606,93 604,98 C602,102 597,99 597,96 C595,98 591,100 590.5,97z" fill="#f7f7f7" stroke="#555" stroke-width="1.1"/><g fill="none" stroke="#555" stroke-width="0.9"><path d="M627,85 L637,80 L648.5,85 L648.5,96 L637,100 L627,96z M637,80 V100 M627,88.5 L637,85 L648.5,88.5 M627,92 L637,90 L648.5,92 M631,83.5 V98 M633.5,82 V99 M641,82 V99 M644.5,83.5 V98"/></g><path d="M667,80 C661,82 662,86 664,88 C666,90 666,93 661,96 M678,80 C684,82 683,86 681,88 C679,90 679,93 684,96" fill="none" stroke="#555" stroke-width="1.3"/><line x1="672.5" y1="77" x2="672.5" y2="99" stroke="#555" stroke-width="1" stroke-dasharray="2 2"/><path d="M697.5,97 C705,99 711,96 716,90" fill="none" stroke="#444" stroke-width="1.3"/><circle cx="718" cy="87" r="0.9" fill="#555"/><circle cx="720.5" cy="83.5" r="0.9" fill="#555"/><circle cx="722.5" cy="80" r="1.1" fill="#555"/><ellipse cx="745" cy="89" rx="9.5" ry="10.5" fill="none" stroke="#555" stroke-width="1.3" stroke-dasharray="22 2 2 2 2 2 2 2 2 2 2 2"/><path d="M768.5,99 V86 H781 V99" fill="none" stroke="#444" stroke-width="1.2"/><circle cx="783" cy="86" r="7" fill="none" stroke="#444" stroke-width="1.2"/><g stroke="#c9c9c9" stroke-width="0.9"><rect x="807" y="78.5" width="11" height="14" fill="#f1f1f1"/><rect x="811" y="81.5" width="11" height="14" fill="#f3f3f3"/><rect x="815" y="84.5" width="12" height="13" fill="#e6e6e6"/></g><path d="M846,78 L839.5,97.5 L852,97.5z" fill="#e2dacd"/><path d="M846,78 L844.5,83 L847.5,83z" fill="#222"/><path d="M859,78 L856,97.5 L862.5,97.5z" fill="#8b7a6a"/><path d="M859,78 L857.5,86 L860.5,86z" fill="#555"/><path d="M896.10,88.00 A10.1,10.1 0 0 0 895.90,85.99" fill="none" stroke="hsl(3,100%,50%)" stroke-width="4"/><path d="M895.95,86.25 A10.1,10.1 0 0 0 895.40,84.30" fill="none" stroke="hsl(8,100%,50%)" stroke-width="4"/><path d="M895.49,84.55 A10.1,10.1 0 0 0 894.61,82.72" fill="none" stroke="hsl(14,100%,50%)" stroke-width="4"/><path d="M894.75,82.95 A10.1,10.1 0 0 0 893.56,81.31" fill="none" stroke="hsl(19,100%,50%)" stroke-width="4"/><path d="M893.74,81.51 A10.1,10.1 0 0 0 892.29,80.10" fill="none" stroke="hsl(25,100%,50%)" stroke-width="4"/><path d="M892.49,80.26 A10.1,10.1 0 0 0 890.82,79.12" fill="none" stroke="hsl(28,100%,50%)" stroke-width="4"/><path d="M891.05,79.25 A10.1,10.1 0 0 0 889.20,78.42" fill="none" stroke="hsl(32,100%,50%)" stroke-width="4"/><path d="M889.45,78.51 A10.1,10.1 0 0 0 887.49,78.01" fill="none" stroke="hsl(35,100%,50%)" stroke-width="4"/><path d="M887.75,78.05 A10.1,10.1 0 0 0 885.74,77.90" fill="none" stroke="hsl(38,100%,50%)" stroke-width="4"/><path d="M886.00,77.90 A10.1,10.1 0 0 0 883.99,78.10" fill="none" stroke="hsl(42,100%,50%)" stroke-width="4"/><path d="M884.25,78.05 A10.1,10.1 0 0 0 882.30,78.60" fill="none" stroke="hsl(47,100%,50%)" stroke-width="4"/><path d="M882.55,78.51 A10.1,10.1 0 0 0 880.72,79.39" fill="none" stroke="hsl(51,100%,50%)" stroke-width="4"/><path d="M880.95,79.25 A10.1,10.1 0 0 0 879.31,80.44" fill="none" stroke="hsl(56,100%,50%)" stroke-width="4"/><path d="M879.51,80.26 A10.1,10.1 0 0 0 878.10,81.71" fill="none" stroke="hsl(60,100%,50%)" stroke-width="4"/><path d="M878.26,81.51 A10.1,10.1 0 0 0 877.12,83.18" fill="none" stroke="hsl(71,100%,50%)" stroke-width="4"/><path d="M877.25,82.95 A10.1,10.1 0 0 0 876.42,84.80" fill="none" stroke="hsl(82,100%,50%)" stroke-width="4"/><path d="M876.51,84.55 A10.1,10.1 0 0 0 876.01,86.51" fill="none" stroke="hsl(93,100%,50%)" stroke-width="4"/><path d="M876.05,86.25 A10.1,10.1 0 0 0 875.90,88.26" fill="none" stroke="hsl(104,100%,50%)" stroke-width="4"/><path d="M875.90,88.00 A10.1,10.1 0 0 0 876.10,90.01" fill="none" stroke="hsl(119,100%,50%)" stroke-width="4"/><path d="M876.05,89.75 A10.1,10.1 0 0 0 876.60,91.70" fill="none" stroke="hsl(137,100%,50%)" stroke-width="4"/><path d="M876.51,91.45 A10.1,10.1 0 0 0 877.39,93.28" fill="none" stroke="hsl(154,100%,50%)" stroke-width="4"/><path d="M877.25,93.05 A10.1,10.1 0 0 0 878.44,94.69" fill="none" stroke="hsl(172,100%,50%)" stroke-width="4"/><path d="M878.26,94.49 A10.1,10.1 0 0 0 879.71,95.90" fill="none" stroke="hsl(190,100%,50%)" stroke-width="4"/><path d="M879.51,95.74 A10.1,10.1 0 0 0 881.18,96.88" fill="none" stroke="hsl(201,100%,50%)" stroke-width="4"/><path d="M880.95,96.75 A10.1,10.1 0 0 0 882.80,97.58" fill="none" stroke="hsl(212,100%,50%)" stroke-width="4"/><path d="M882.55,97.49 A10.1,10.1 0 0 0 884.51,97.99" fill="none" stroke="hsl(223,100%,50%)" stroke-width="4"/><path d="M884.25,97.95 A10.1,10.1 0 0 0 886.26,98.10" fill="none" stroke="hsl(234,100%,50%)" stroke-width="4"/><path d="M886.00,98.10 A10.1,10.1 0 0 0 888.01,97.90" fill="none" stroke="hsl(245,100%,50%)" stroke-width="4"/><path d="M887.75,97.95 A10.1,10.1 0 0 0 889.70,97.40" fill="none" stroke="hsl(255,100%,50%)" stroke-width="4"/><path d="M889.45,97.49 A10.1,10.1 0 0 0 891.28,96.61" fill="none" stroke="hsl(265,100%,50%)" stroke-width="4"/><path d="M891.05,96.75 A10.1,10.1 0 0 0 892.69,95.56" fill="none" stroke="hsl(275,100%,50%)" stroke-width="4"/><path d="M892.49,95.74 A10.1,10.1 0 0 0 893.90,94.29" fill="none" stroke="hsl(285,100%,50%)" stroke-width="4"/><path d="M893.74,94.49 A10.1,10.1 0 0 0 894.88,92.82" fill="none" stroke="hsl(302,100%,50%)" stroke-width="4"/><path d="M894.75,93.05 A10.1,10.1 0 0 0 895.58,91.20" fill="none" stroke="hsl(318,100%,50%)" stroke-width="4"/><path d="M895.49,91.45 A10.1,10.1 0 0 0 895.99,89.49" fill="none" stroke="hsl(335,100%,50%)" stroke-width="4"/><path d="M895.95,89.75 A10.1,10.1 0 0 0 896.10,87.74" fill="none" stroke="hsl(352,100%,50%)" stroke-width="4"/><rect x="909" y="77" width="10.5" height="10" rx="2.5" fill="#dde6ee" stroke="#888" stroke-width="1"/><rect x="921.5" y="77" width="10.5" height="10" rx="2.5" fill="#bccbd8" stroke="#888" stroke-width="1"/><rect x="909" y="89" width="10.5" height="10" rx="2.5" fill="#6f8396" stroke="#777" stroke-width="1"/><rect x="921.5" y="89" width="10.5" height="10" rx="2.5" fill="#2c3a45" stroke="#555" stroke-width="1"/><rect x="652.5" y="98" width="330" height="37" fill="#efefef" stroke="#d4d4d4" stroke-width="1"/><rect x="653" y="98.5" width="14.5" height="36" fill="#e9e9e9"/><rect x="968" y="98.5" width="14.5" height="36" fill="#e9e9e9"/><rect x="667.6" y="98.5" width="1" height="36" fill="#d6d6d6"/><rect x="772.4" y="98.5" width="1" height="36" fill="#d6d6d6"/><rect x="858.3" y="98.5" width="1" height="36" fill="#d6d6d6"/><rect x="897" y="98.5" width="1" height="36" fill="#d6d6d6"/><rect x="968" y="98.5" width="1" height="36" fill="#d6d6d6"/><rect x="669.5" y="101.5" width="30.5" height="30.5" rx="3" fill="url(#gSel)" stroke="#4a8fd8" stroke-width="1"/><rect x="674.5" y="109" width="20.5" height="15.5" fill="#e8e8e8" stroke="#555" stroke-width="1.2"/><rect x="708.5" y="109" width="20.5" height="15.5" fill="url(#gLin)" stroke="#555" stroke-width="1.2"/><rect x="743" y="109" width="20.5" height="15.5" fill="url(#gRad)" stroke="#555" stroke-width="1.2"/><rect x="776.5" y="106.5" width="25.5" height="17" rx="3" fill="#f8f8f8" stroke="#e0e0e0" stroke-width="1"/><text x="789.5" y="119" font-family='"Liberation Sans", sans-serif' font-size="10.5" fill="#111" text-anchor="middle">120</text><rect x="807.5" y="99.5" width="12.5" height="34" fill="#dcdcdc"/><rect x="807.5" y="115" width="12.5" height="4.5" fill="#fafafa" stroke="#777" stroke-width="0.8"/><path d="M839,110 C841,113 842,114.5 842,116.5 A3,3 0 0 1 836,116.5 C836,114.5 837,113 839,110z" fill="#666"/><path d="M830,118.5 L839,114.5 L848.5,118.5 L839,123z" fill="none" stroke="#555" stroke-width="1"/><g stroke="#c4c4c4" stroke-width="1" fill="none"><circle cx="869" cy="117" r="2.2"/><path d="M871.5,117 h12"/><path d="M871,111 C874,107 882,107 885,111 M885,123 C882,127 874,127 871,123"/></g><circle cx="886" cy="117" r="2.5" fill="#c4c4c4"/><path d="M910,111 L923,123 M923,111 L910,123" stroke="#b8b8b8" stroke-width="1.1"/><path d="M942.5,117.5 L948,122.5 L959.5,111" fill="none" stroke="#b8b8b8" stroke-width="1.1"/><circle cx="975.6" cy="105.5" r="5" fill="#dcdcdc" stroke="#c8c8c8" stroke-width="0.8"/></svg>
</body></html>
